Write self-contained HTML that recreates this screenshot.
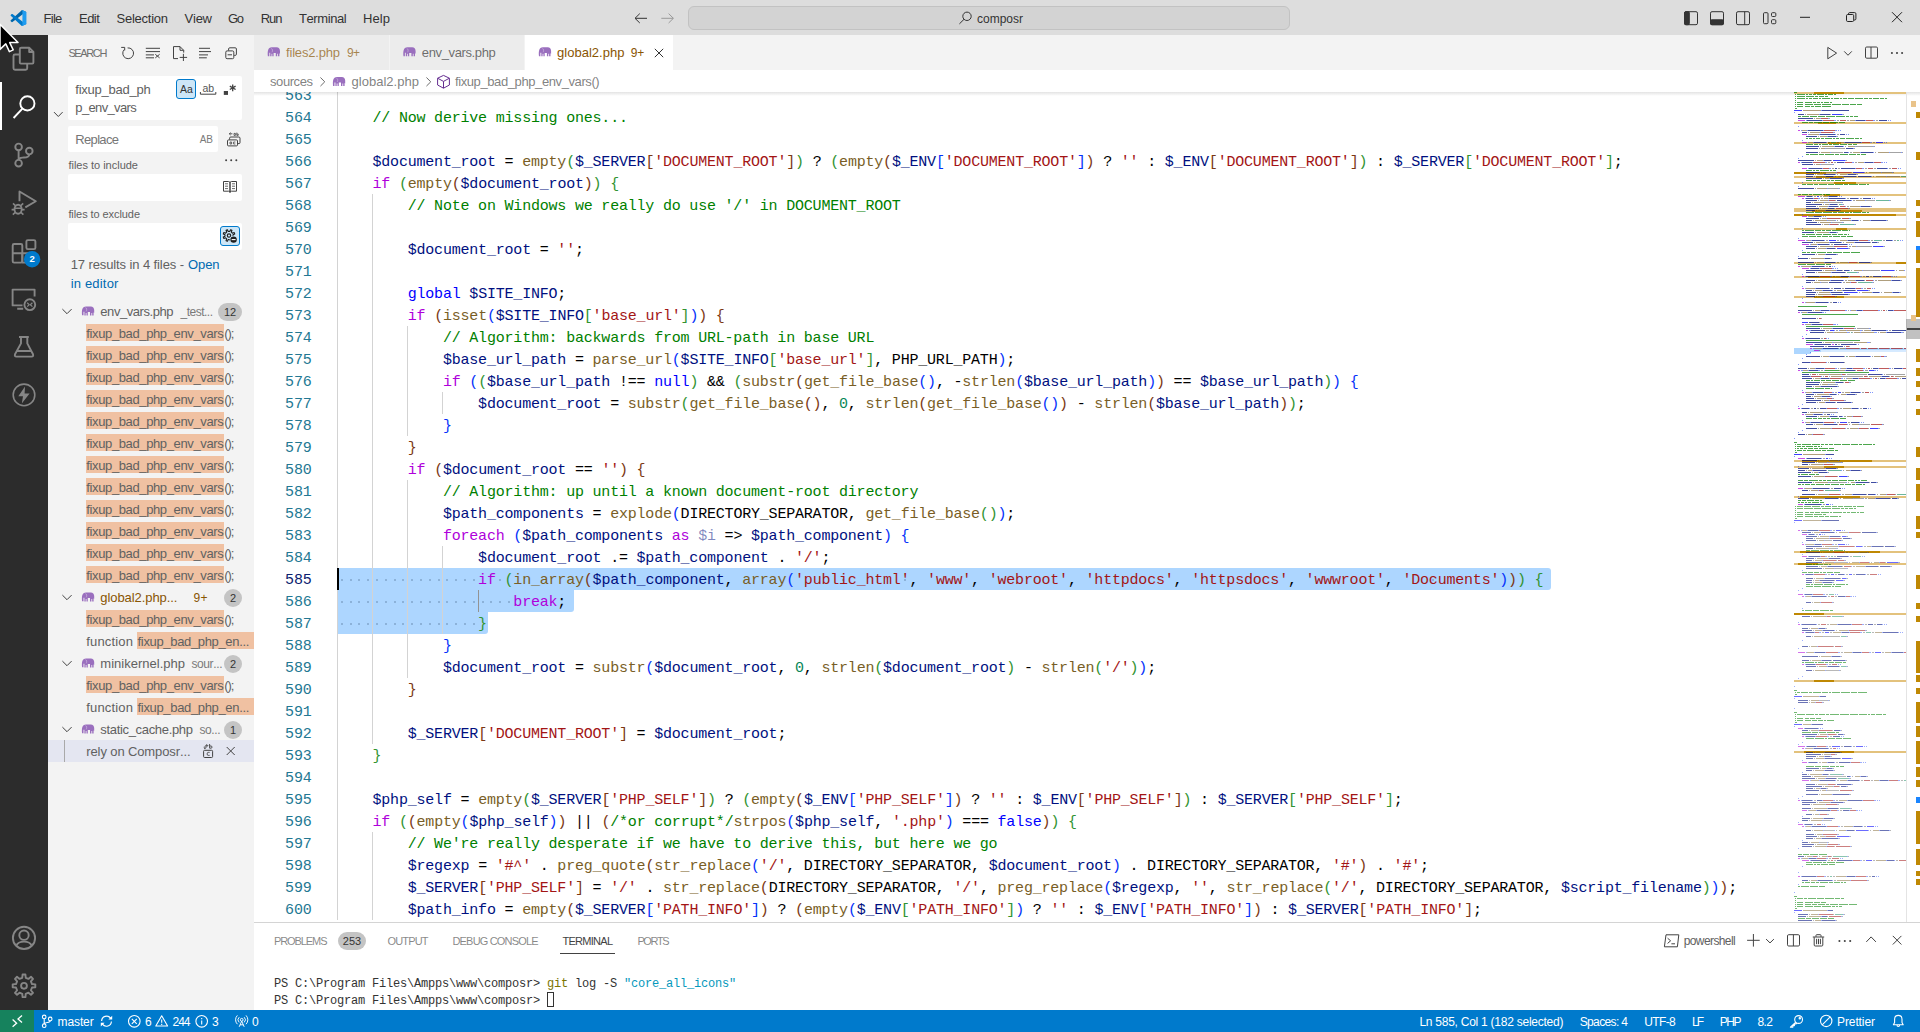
<!DOCTYPE html>
<html><head><meta charset="utf-8"><title>global2.php - composr - Visual Studio Code</title>
<style>
*{box-sizing:border-box;margin:0;padding:0}
html,body{width:1920px;height:1032px;overflow:hidden;background:#fff}
body{position:relative;font-family:"Liberation Sans",sans-serif;font-kerning:none;font-variant-ligatures:none;-webkit-font-smoothing:antialiased}
.r{position:absolute}
.t{position:absolute;white-space:pre;display:block}
.s{font-family:"Liberation Sans",sans-serif}
.m{font-family:"Liberation Mono",monospace}
.ed .ln{position:absolute;left:0;width:57.5px;text-align:right;font:15px/22px "Liberation Mono",monospace;letter-spacing:-0.2px;height:22px}
.ed .cl{position:absolute;left:83.3px;white-space:pre;font:15px/22px "Liberation Mono",monospace;letter-spacing:-0.2px;height:22px;color:#000}
.ed i{font-style:normal}
.ed b{position:absolute;width:2px;height:2px;border-radius:1px;background:#6f93b8;opacity:.7}
svg{position:absolute;overflow:visible}
.c0{color:#008000}.c1{color:#001080}.c2{color:#000000}.c3{color:#795E26}.c4{color:#319331}.c5{color:#7B3814}.c6{color:#A31515}.c7{color:#0431FA}.c8{color:#AF00DB}.c9{color:#0000FF}.c10{color:#098658}.c11{color:#00108080}</style></head>
<body>
<div class="r" style="left:0px;top:0px;width:1920px;height:35px;background:#DDDDDD;"></div>
<span class="t s" style="top:8.60px;line-height:20px;font-size:13px;color:#333333;left:43.50px;letter-spacing:-0.716px;">File</span>
<span class="t s" style="top:8.60px;line-height:20px;font-size:13px;color:#333333;left:79.00px;letter-spacing:-0.534px;">Edit</span>
<span class="t s" style="top:8.60px;line-height:20px;font-size:13px;color:#333333;left:116.50px;letter-spacing:-0.247px;">Selection</span>
<span class="t s" style="top:8.60px;line-height:20px;font-size:13px;color:#333333;left:184.60px;letter-spacing:-0.259px;">View</span>
<span class="t s" style="top:8.60px;line-height:20px;font-size:13px;color:#333333;left:228.00px;letter-spacing:-1.342px;">Go</span>
<span class="t s" style="top:8.60px;line-height:20px;font-size:13px;color:#333333;left:260.80px;letter-spacing:-1.074px;">Run</span>
<span class="t s" style="top:8.60px;line-height:20px;font-size:13px;color:#333333;left:299.00px;letter-spacing:-0.409px;">Terminal</span>
<span class="t s" style="top:8.60px;line-height:20px;font-size:13px;color:#333333;left:363.00px;letter-spacing:0.088px;">Help</span>
<div class="r" style="left:688px;top:6px;width:602px;height:24px;background:#D3D3D3;border:1px solid #C2C2C2;border-radius:6px"></div>
<span class="t s" style="top:9.50px;line-height:18px;font-size:12px;color:#333333;left:977.00px;letter-spacing:-0.002px;">composr</span>
<div class="r" style="left:0px;top:35px;width:48px;height:975px;background:#2C2C2C;"></div>
<div class="r" style="left:0px;top:82px;width:2px;height:48px;background:#FFFFFF;"></div>
<div class="r" style="left:48px;top:35px;width:206px;height:975px;background:#F3F3F3;"></div>
<span class="t s" style="top:45.00px;line-height:16px;font-size:11px;color:#6F6F6F;left:68.40px;letter-spacing:-1.368px;">SEARCH</span>
<div class="r" style="left:68px;top:76px;width:174px;height:44px;background:#FFFFFF;border-radius:2px;"></div>
<span class="t s" style="top:79.60px;line-height:20px;font-size:13px;color:#616161;left:75.30px;letter-spacing:-0.243px;">fixup_bad_ph</span>
<span class="t s" style="top:98.00px;line-height:20px;font-size:13px;color:#616161;left:75.30px;letter-spacing:-0.645px;">p_env_vars</span>
<div class="r" style="left:176px;top:79px;width:20px;height:20px;background:#CDE6F7;border:1px solid #007ACC;border-radius:3px"></div>
<div class="r" style="left:68px;top:126px;width:150px;height:26px;background:#FFFFFF;border-radius:2px;"></div>
<span class="t s" style="top:129.60px;line-height:20px;font-size:13px;color:#767676;left:75.30px;letter-spacing:-0.666px;">Replace</span>
<span class="t s" style="top:157.00px;line-height:16px;font-size:11px;color:#616161;left:68.40px;letter-spacing:-0.007px;">files to include</span>
<div class="r" style="left:68px;top:174px;width:174px;height:27px;background:#FFFFFF;border-radius:2px;"></div>
<span class="t s" style="top:206.00px;line-height:16px;font-size:11px;color:#616161;left:68.40px;letter-spacing:-0.077px;">files to exclude</span>
<div class="r" style="left:68px;top:223px;width:174px;height:27px;background:#FFFFFF;border-radius:2px;"></div>
<div class="r" style="left:220px;top:226px;width:20px;height:20px;background:#CDE6F7;border:1px solid #007ACC;border-radius:3px"></div>
<span class="t s" style="top:254.70px;line-height:20px;font-size:13px;color:#616161;left:70.70px;letter-spacing:-0.105px;">17 results in 4 files -</span>
<span class="t s" style="top:254.70px;line-height:20px;font-size:13px;color:#006AB1;left:188.00px;letter-spacing:-0.067px;">Open</span>
<span class="t s" style="top:273.60px;line-height:20px;font-size:13px;color:#006AB1;left:70.70px;letter-spacing:0.181px;">in editor</span>
<span class="t s" style="top:301.60px;line-height:20px;font-size:13px;color:#616161;left:100.30px;letter-spacing:-0.432px;">env_vars.php</span>
<span class="t s" style="top:302.60px;line-height:18px;font-size:12px;color:#7A7A7A;left:180.60px;letter-spacing:-0.517px;">_test...</span>
<div class="r" style="left:218px;top:303px;width:24px;height:18px;background:#C4C4C4;border-radius:9px"></div>
<span class="t s" style="top:303.60px;line-height:16px;font-size:11px;color:#333333;left:223.88px;">12</span>
<div class="r" style="left:86px;top:324px;width:138px;height:17px;background:#F0C1A2;"></div>
<span class="t s" style="top:323.60px;line-height:20px;font-size:13px;color:#616161;left:86.30px;letter-spacing:-0.375px;">fixup_bad_php_env_vars</span>
<span class="t s" style="top:323.60px;line-height:20px;font-size:13px;color:#616161;left:224.30px;letter-spacing:-1.135px;">();</span>
<div class="r" style="left:86px;top:346px;width:138px;height:17px;background:#F0C1A2;"></div>
<span class="t s" style="top:345.60px;line-height:20px;font-size:13px;color:#616161;left:86.30px;letter-spacing:-0.375px;">fixup_bad_php_env_vars</span>
<span class="t s" style="top:345.60px;line-height:20px;font-size:13px;color:#616161;left:224.30px;letter-spacing:-1.135px;">();</span>
<div class="r" style="left:86px;top:368px;width:138px;height:17px;background:#F0C1A2;"></div>
<span class="t s" style="top:367.60px;line-height:20px;font-size:13px;color:#616161;left:86.30px;letter-spacing:-0.375px;">fixup_bad_php_env_vars</span>
<span class="t s" style="top:367.60px;line-height:20px;font-size:13px;color:#616161;left:224.30px;letter-spacing:-1.135px;">();</span>
<div class="r" style="left:86px;top:390px;width:138px;height:17px;background:#F0C1A2;"></div>
<span class="t s" style="top:389.60px;line-height:20px;font-size:13px;color:#616161;left:86.30px;letter-spacing:-0.375px;">fixup_bad_php_env_vars</span>
<span class="t s" style="top:389.60px;line-height:20px;font-size:13px;color:#616161;left:224.30px;letter-spacing:-1.135px;">();</span>
<div class="r" style="left:86px;top:412px;width:138px;height:17px;background:#F0C1A2;"></div>
<span class="t s" style="top:411.60px;line-height:20px;font-size:13px;color:#616161;left:86.30px;letter-spacing:-0.375px;">fixup_bad_php_env_vars</span>
<span class="t s" style="top:411.60px;line-height:20px;font-size:13px;color:#616161;left:224.30px;letter-spacing:-1.135px;">();</span>
<div class="r" style="left:86px;top:434px;width:138px;height:17px;background:#F0C1A2;"></div>
<span class="t s" style="top:433.60px;line-height:20px;font-size:13px;color:#616161;left:86.30px;letter-spacing:-0.375px;">fixup_bad_php_env_vars</span>
<span class="t s" style="top:433.60px;line-height:20px;font-size:13px;color:#616161;left:224.30px;letter-spacing:-1.135px;">();</span>
<div class="r" style="left:86px;top:456px;width:138px;height:17px;background:#F0C1A2;"></div>
<span class="t s" style="top:455.60px;line-height:20px;font-size:13px;color:#616161;left:86.30px;letter-spacing:-0.375px;">fixup_bad_php_env_vars</span>
<span class="t s" style="top:455.60px;line-height:20px;font-size:13px;color:#616161;left:224.30px;letter-spacing:-1.135px;">();</span>
<div class="r" style="left:86px;top:478px;width:138px;height:17px;background:#F0C1A2;"></div>
<span class="t s" style="top:477.60px;line-height:20px;font-size:13px;color:#616161;left:86.30px;letter-spacing:-0.375px;">fixup_bad_php_env_vars</span>
<span class="t s" style="top:477.60px;line-height:20px;font-size:13px;color:#616161;left:224.30px;letter-spacing:-1.135px;">();</span>
<div class="r" style="left:86px;top:500px;width:138px;height:17px;background:#F0C1A2;"></div>
<span class="t s" style="top:499.60px;line-height:20px;font-size:13px;color:#616161;left:86.30px;letter-spacing:-0.375px;">fixup_bad_php_env_vars</span>
<span class="t s" style="top:499.60px;line-height:20px;font-size:13px;color:#616161;left:224.30px;letter-spacing:-1.135px;">();</span>
<div class="r" style="left:86px;top:522px;width:138px;height:17px;background:#F0C1A2;"></div>
<span class="t s" style="top:521.60px;line-height:20px;font-size:13px;color:#616161;left:86.30px;letter-spacing:-0.375px;">fixup_bad_php_env_vars</span>
<span class="t s" style="top:521.60px;line-height:20px;font-size:13px;color:#616161;left:224.30px;letter-spacing:-1.135px;">();</span>
<div class="r" style="left:86px;top:544px;width:138px;height:17px;background:#F0C1A2;"></div>
<span class="t s" style="top:543.60px;line-height:20px;font-size:13px;color:#616161;left:86.30px;letter-spacing:-0.375px;">fixup_bad_php_env_vars</span>
<span class="t s" style="top:543.60px;line-height:20px;font-size:13px;color:#616161;left:224.30px;letter-spacing:-1.135px;">();</span>
<div class="r" style="left:86px;top:566px;width:138px;height:17px;background:#F0C1A2;"></div>
<span class="t s" style="top:565.60px;line-height:20px;font-size:13px;color:#616161;left:86.30px;letter-spacing:-0.375px;">fixup_bad_php_env_vars</span>
<span class="t s" style="top:565.60px;line-height:20px;font-size:13px;color:#616161;left:224.30px;letter-spacing:-1.135px;">();</span>
<span class="t s" style="top:587.60px;line-height:20px;font-size:13px;color:#895503;left:100.30px;letter-spacing:-0.074px;">global2.php...</span>
<span class="t s" style="top:588.60px;line-height:18px;font-size:12px;color:#895503;left:193.40px;letter-spacing:0.318px;">9+</span>
<div class="r" style="left:224px;top:589px;width:18px;height:18px;background:#C4C4C4;border-radius:9px"></div>
<span class="t s" style="top:589.60px;line-height:16px;font-size:11px;color:#333333;left:229.94px;">2</span>
<div class="r" style="left:86px;top:610px;width:138px;height:17px;background:#F0C1A2;"></div>
<span class="t s" style="top:609.60px;line-height:20px;font-size:13px;color:#616161;left:86.30px;letter-spacing:-0.375px;">fixup_bad_php_env_vars</span>
<span class="t s" style="top:609.60px;line-height:20px;font-size:13px;color:#616161;left:224.30px;letter-spacing:-1.135px;">();</span>
<div class="r" style="left:137px;top:632px;width:117px;height:17px;background:#F0C1A2;"></div>
<span class="t s" style="top:631.60px;line-height:20px;font-size:13px;color:#616161;left:86.30px;letter-spacing:0.167px;">function</span>
<span class="t s" style="top:631.60px;line-height:20px;font-size:13px;color:#616161;left:137.60px;letter-spacing:-0.340px;">fixup_bad_php_en...</span>
<span class="t s" style="top:653.60px;line-height:20px;font-size:13px;color:#616161;left:100.30px;letter-spacing:0.012px;">minikernel.php</span>
<span class="t s" style="top:654.60px;line-height:18px;font-size:12px;color:#7A7A7A;left:191.40px;letter-spacing:-0.374px;">sour...</span>
<div class="r" style="left:224px;top:655px;width:18px;height:18px;background:#C4C4C4;border-radius:9px"></div>
<span class="t s" style="top:655.60px;line-height:16px;font-size:11px;color:#333333;left:229.94px;">2</span>
<div class="r" style="left:86px;top:676px;width:138px;height:17px;background:#F0C1A2;"></div>
<span class="t s" style="top:675.60px;line-height:20px;font-size:13px;color:#616161;left:86.30px;letter-spacing:-0.375px;">fixup_bad_php_env_vars</span>
<span class="t s" style="top:675.60px;line-height:20px;font-size:13px;color:#616161;left:224.30px;letter-spacing:-1.135px;">();</span>
<div class="r" style="left:137px;top:698px;width:117px;height:17px;background:#F0C1A2;"></div>
<span class="t s" style="top:697.60px;line-height:20px;font-size:13px;color:#616161;left:86.30px;letter-spacing:0.167px;">function</span>
<span class="t s" style="top:697.60px;line-height:20px;font-size:13px;color:#616161;left:137.60px;letter-spacing:-0.340px;">fixup_bad_php_en...</span>
<span class="t s" style="top:719.60px;line-height:20px;font-size:13px;color:#616161;left:100.30px;letter-spacing:-0.324px;">static_cache.php</span>
<span class="t s" style="top:720.60px;line-height:18px;font-size:12px;color:#7A7A7A;left:199.50px;letter-spacing:-0.419px;">so...</span>
<div class="r" style="left:224px;top:721px;width:18px;height:18px;background:#C4C4C4;border-radius:9px"></div>
<span class="t s" style="top:721.60px;line-height:16px;font-size:11px;color:#333333;left:229.94px;">1</span>
<div class="r" style="left:48px;top:740px;width:206px;height:22px;background:#E4E6F1;"></div>
<div class="r" style="left:64px;top:740px;width:1px;height:22px;background:#A9A9A9;"></div>
<span class="t s" style="top:741.60px;line-height:20px;font-size:13px;color:#616161;left:86.30px;letter-spacing:-0.118px;">rely on Composr...</span>
<div class="r" style="left:254px;top:35px;width:1666px;height:35px;background:#F3F3F3;"></div>
<div class="r" style="left:254px;top:35px;width:135px;height:35px;background:#ECECEC;"></div>
<div class="r" style="left:389px;top:35px;width:1px;height:35px;background:#F3F3F3;"></div>
<div class="r" style="left:390px;top:35px;width:134px;height:35px;background:#ECECEC;"></div>
<div class="r" style="left:524px;top:35px;width:1px;height:35px;background:#F3F3F3;"></div>
<div class="r" style="left:525px;top:35px;width:148px;height:35px;background:#FFFFFF;"></div>
<span class="t s" style="top:43.20px;line-height:20px;font-size:13px;color:#895503B3;left:286.00px;letter-spacing:-0.183px;">files2.php</span>
<span class="t s" style="top:44.20px;line-height:18px;font-size:12px;color:#895503B3;left:347.00px;letter-spacing:-0.682px;">9+</span>
<span class="t s" style="top:43.20px;line-height:20px;font-size:13px;color:#333333B3;left:421.80px;letter-spacing:-0.368px;">env_vars.php</span>
<span class="t s" style="top:43.20px;line-height:20px;font-size:13px;color:#895503;left:557.00px;letter-spacing:0.027px;">global2.php</span>
<span class="t s" style="top:44.20px;line-height:18px;font-size:12px;color:#895503;left:630.70px;letter-spacing:-0.182px;">9+</span>
<div class="r" style="left:254px;top:70px;width:1666px;height:22px;background:#FFFFFF;"></div>
<span class="t s" style="top:72.20px;line-height:20px;font-size:13px;color:#616161CC;left:270.00px;letter-spacing:-0.420px;">sources</span>
<span class="t s" style="top:72.20px;line-height:20px;font-size:13px;color:#616161CC;left:351.50px;letter-spacing:0.027px;">global2.php</span>
<span class="t s" style="top:72.20px;line-height:20px;font-size:13px;color:#616161CC;left:455.00px;letter-spacing:-0.402px;">fixup_bad_php_env_vars()</span>
<div class="r ed" style="left:254px;top:92px;width:1666px;height:830px;background:#fff;overflow:hidden">
<div class="r" style="left:83px;top:476px;width:1214px;height:22px;background:#ADD6FF;border-radius:0 3px 3px 0;"></div>
<div class="r" style="left:83px;top:498px;width:237px;height:22px;background:#ADD6FF;border-radius:0 0 3px 0;"></div>
<div class="r" style="left:83px;top:520px;width:151px;height:22px;background:#ADD6FF;border-radius:0 0 3px 0;"></div>
<div class="r" style="left:83px;top:-8px;width:1px;height:836px;background:#D3D3D3;"></div>
<div class="r" style="left:118px;top:102px;width:1px;height:550px;background:#D3D3D3;"></div>
<div class="r" style="left:118px;top:740px;width:1px;height:88px;background:#D3D3D3;"></div>
<div class="r" style="left:153px;top:234px;width:1px;height:110px;background:#D3D3D3;"></div>
<div class="r" style="left:153px;top:388px;width:1px;height:198px;background:#D3D3D3;"></div>
<div class="r" style="left:188px;top:300px;width:1px;height:22px;background:#D3D3D3;"></div>
<div class="r" style="left:188px;top:454px;width:1px;height:88px;background:#D3D3D3;"></div>
<div class="r" style="left:224px;top:498px;width:1px;height:22px;background:#939393;"></div>
<div class="r" style="left:83px;top:476px;width:2px;height:22px;background:#000;"></div>
<b style="left:86.7px;top:486.5px"></b><b style="left:95.5px;top:486.5px"></b><b style="left:104.3px;top:486.5px"></b><b style="left:113.1px;top:486.5px"></b><b style="left:121.9px;top:486.5px"></b><b style="left:130.7px;top:486.5px"></b><b style="left:139.5px;top:486.5px"></b><b style="left:148.3px;top:486.5px"></b><b style="left:157.1px;top:486.5px"></b><b style="left:165.9px;top:486.5px"></b><b style="left:174.7px;top:486.5px"></b><b style="left:183.5px;top:486.5px"></b><b style="left:192.3px;top:486.5px"></b><b style="left:201.1px;top:486.5px"></b><b style="left:209.9px;top:486.5px"></b><b style="left:218.7px;top:486.5px"></b><b style="left:245.1px;top:486.5px"></b><b style="left:456.3px;top:486.5px"></b><b style="left:588.3px;top:486.5px"></b><b style="left:649.9px;top:486.5px"></b><b style="left:746.7px;top:486.5px"></b><b style="left:852.3px;top:486.5px"></b><b style="left:966.7px;top:486.5px"></b><b style="left:1063.5px;top:486.5px"></b><b style="left:1177.9px;top:486.5px"></b>
<b style="left:86.7px;top:508.5px"></b><b style="left:95.5px;top:508.5px"></b><b style="left:104.3px;top:508.5px"></b><b style="left:113.1px;top:508.5px"></b><b style="left:121.9px;top:508.5px"></b><b style="left:130.7px;top:508.5px"></b><b style="left:139.5px;top:508.5px"></b><b style="left:148.3px;top:508.5px"></b><b style="left:157.1px;top:508.5px"></b><b style="left:165.9px;top:508.5px"></b><b style="left:174.7px;top:508.5px"></b><b style="left:183.5px;top:508.5px"></b><b style="left:192.3px;top:508.5px"></b><b style="left:201.1px;top:508.5px"></b><b style="left:209.9px;top:508.5px"></b><b style="left:218.7px;top:508.5px"></b><b style="left:227.5px;top:508.5px"></b><b style="left:236.3px;top:508.5px"></b><b style="left:245.1px;top:508.5px"></b><b style="left:253.9px;top:508.5px"></b>
<b style="left:86.7px;top:530.5px"></b><b style="left:95.5px;top:530.5px"></b><b style="left:104.3px;top:530.5px"></b><b style="left:113.1px;top:530.5px"></b><b style="left:121.9px;top:530.5px"></b><b style="left:130.7px;top:530.5px"></b><b style="left:139.5px;top:530.5px"></b><b style="left:148.3px;top:530.5px"></b><b style="left:157.1px;top:530.5px"></b><b style="left:165.9px;top:530.5px"></b><b style="left:174.7px;top:530.5px"></b><b style="left:183.5px;top:530.5px"></b><b style="left:192.3px;top:530.5px"></b><b style="left:201.1px;top:530.5px"></b><b style="left:209.9px;top:530.5px"></b><b style="left:218.7px;top:530.5px"></b>
<div class="ln" style="top:-6px;color:#237893">563</div>
<div class="ln" style="top:16px;color:#237893">564</div>
<div class="cl" style="top:16px"><i class="c0">    // Now derive missing ones...</i></div>
<div class="ln" style="top:38px;color:#237893">565</div>
<div class="ln" style="top:60px;color:#237893">566</div>
<div class="cl" style="top:60px"><i class="c1">    $document_root </i><i class="c2">= </i><i class="c3">empty</i><i class="c4">(</i><i class="c1">$_SERVER</i><i class="c5">[</i><i class="c6">'DOCUMENT_ROOT'</i><i class="c5">]</i><i class="c4">) </i><i class="c2">? </i><i class="c4">(</i><i class="c3">empty</i><i class="c5">(</i><i class="c1">$_ENV</i><i class="c7">[</i><i class="c6">'DOCUMENT_ROOT'</i><i class="c7">]</i><i class="c5">) </i><i class="c2">? </i><i class="c6">'' </i><i class="c2">: </i><i class="c1">$_ENV</i><i class="c5">[</i><i class="c6">'DOCUMENT_ROOT'</i><i class="c5">]</i><i class="c4">) </i><i class="c2">: </i><i class="c1">$_SERVER</i><i class="c4">[</i><i class="c6">'DOCUMENT_ROOT'</i><i class="c4">]</i><i class="c2">;</i></div>
<div class="ln" style="top:82px;color:#237893">567</div>
<div class="cl" style="top:82px"><i class="c8">    if </i><i class="c4">(</i><i class="c3">empty</i><i class="c5">(</i><i class="c1">$document_root</i><i class="c5">)</i><i class="c4">) {</i></div>
<div class="ln" style="top:104px;color:#237893">568</div>
<div class="cl" style="top:104px"><i class="c0">        // Note on Windows we really do use '/' in DOCUMENT_ROOT</i></div>
<div class="ln" style="top:126px;color:#237893">569</div>
<div class="ln" style="top:148px;color:#237893">570</div>
<div class="cl" style="top:148px"><i class="c1">        $document_root </i><i class="c2">= </i><i class="c6">''</i><i class="c2">;</i></div>
<div class="ln" style="top:170px;color:#237893">571</div>
<div class="ln" style="top:192px;color:#237893">572</div>
<div class="cl" style="top:192px"><i class="c9">        global </i><i class="c1">$SITE_INFO</i><i class="c2">;</i></div>
<div class="ln" style="top:214px;color:#237893">573</div>
<div class="cl" style="top:214px"><i class="c8">        if </i><i class="c5">(</i><i class="c3">isset</i><i class="c7">(</i><i class="c1">$SITE_INFO</i><i class="c4">[</i><i class="c6">'base_url'</i><i class="c4">]</i><i class="c7">)</i><i class="c5">) {</i></div>
<div class="ln" style="top:236px;color:#237893">574</div>
<div class="cl" style="top:236px"><i class="c0">            // Algorithm: backwards from URL-path in base URL</i></div>
<div class="ln" style="top:258px;color:#237893">575</div>
<div class="cl" style="top:258px"><i class="c1">            $base_url_path </i><i class="c2">= </i><i class="c3">parse_url</i><i class="c7">(</i><i class="c1">$SITE_INFO</i><i class="c4">[</i><i class="c6">'base_url'</i><i class="c4">]</i><i class="c2">, PHP_URL_PATH</i><i class="c7">)</i><i class="c2">;</i></div>
<div class="ln" style="top:280px;color:#237893">576</div>
<div class="cl" style="top:280px"><i class="c8">            if </i><i class="c7">(</i><i class="c4">(</i><i class="c1">$base_url_path </i><i class="c2">!== </i><i class="c9">null</i><i class="c4">) </i><i class="c2">&amp;&amp; </i><i class="c4">(</i><i class="c3">substr</i><i class="c5">(</i><i class="c3">get_file_base</i><i class="c7">()</i><i class="c2">, -</i><i class="c3">strlen</i><i class="c7">(</i><i class="c1">$base_url_path</i><i class="c7">)</i><i class="c5">) </i><i class="c2">== </i><i class="c1">$base_url_path</i><i class="c4">)</i><i class="c7">) {</i></div>
<div class="ln" style="top:302px;color:#237893">577</div>
<div class="cl" style="top:302px"><i class="c1">                $document_root </i><i class="c2">= </i><i class="c3">substr</i><i class="c4">(</i><i class="c3">get_file_base</i><i class="c5">()</i><i class="c2">, </i><i class="c10">0</i><i class="c2">, </i><i class="c3">strlen</i><i class="c5">(</i><i class="c3">get_file_base</i><i class="c7">()</i><i class="c5">) </i><i class="c2">- </i><i class="c3">strlen</i><i class="c5">(</i><i class="c1">$base_url_path</i><i class="c5">)</i><i class="c4">)</i><i class="c2">;</i></div>
<div class="ln" style="top:324px;color:#237893">578</div>
<div class="cl" style="top:324px"><i class="c7">            }</i></div>
<div class="ln" style="top:346px;color:#237893">579</div>
<div class="cl" style="top:346px"><i class="c5">        }</i></div>
<div class="ln" style="top:368px;color:#237893">580</div>
<div class="cl" style="top:368px"><i class="c8">        if </i><i class="c5">(</i><i class="c1">$document_root </i><i class="c2">== </i><i class="c6">''</i><i class="c5">) {</i></div>
<div class="ln" style="top:390px;color:#237893">581</div>
<div class="cl" style="top:390px"><i class="c0">            // Algorithm: up until a known document-root directory</i></div>
<div class="ln" style="top:412px;color:#237893">582</div>
<div class="cl" style="top:412px"><i class="c1">            $path_components </i><i class="c2">= </i><i class="c3">explode</i><i class="c7">(</i><i class="c2">DIRECTORY_SEPARATOR, </i><i class="c3">get_file_base</i><i class="c4">()</i><i class="c7">)</i><i class="c2">;</i></div>
<div class="ln" style="top:434px;color:#237893">583</div>
<div class="cl" style="top:434px"><i class="c8">            foreach </i><i class="c7">(</i><i class="c1">$path_components </i><i class="c8">as </i><i class="c11">$i </i><i class="c2">=&gt; </i><i class="c1">$path_component</i><i class="c7">) {</i></div>
<div class="ln" style="top:456px;color:#237893">584</div>
<div class="cl" style="top:456px"><i class="c1">                $document_root </i><i class="c2">.= </i><i class="c1">$path_component </i><i class="c2">. </i><i class="c6">'/'</i><i class="c2">;</i></div>
<div class="ln" style="top:478px;color:#0B216F">585</div>
<div class="cl" style="top:478px"><i class="c8">                if </i><i class="c4">(</i><i class="c3">in_array</i><i class="c5">(</i><i class="c1">$path_component</i><i class="c2">, </i><i class="c3">array</i><i class="c7">(</i><i class="c6">'public_html'</i><i class="c2">, </i><i class="c6">'www'</i><i class="c2">, </i><i class="c6">'webroot'</i><i class="c2">, </i><i class="c6">'httpdocs'</i><i class="c2">, </i><i class="c6">'httpsdocs'</i><i class="c2">, </i><i class="c6">'wwwroot'</i><i class="c2">, </i><i class="c6">'Documents'</i><i class="c7">)</i><i class="c5">)</i><i class="c4">) {</i></div>
<div class="ln" style="top:500px;color:#237893">586</div>
<div class="cl" style="top:500px"><i class="c8">                    break</i><i class="c2">;</i></div>
<div class="ln" style="top:522px;color:#237893">587</div>
<div class="cl" style="top:522px"><i class="c4">                }</i></div>
<div class="ln" style="top:544px;color:#237893">588</div>
<div class="cl" style="top:544px"><i class="c7">            }</i></div>
<div class="ln" style="top:566px;color:#237893">589</div>
<div class="cl" style="top:566px"><i class="c1">            $document_root </i><i class="c2">= </i><i class="c3">substr</i><i class="c7">(</i><i class="c1">$document_root</i><i class="c2">, </i><i class="c10">0</i><i class="c2">, </i><i class="c3">strlen</i><i class="c4">(</i><i class="c1">$document_root</i><i class="c4">) </i><i class="c2">- </i><i class="c3">strlen</i><i class="c4">(</i><i class="c6">'/'</i><i class="c4">)</i><i class="c7">)</i><i class="c2">;</i></div>
<div class="ln" style="top:588px;color:#237893">590</div>
<div class="cl" style="top:588px"><i class="c5">        }</i></div>
<div class="ln" style="top:610px;color:#237893">591</div>
<div class="ln" style="top:632px;color:#237893">592</div>
<div class="cl" style="top:632px"><i class="c1">        $_SERVER</i><i class="c5">[</i><i class="c6">'DOCUMENT_ROOT'</i><i class="c5">] </i><i class="c2">= </i><i class="c1">$document_root</i><i class="c2">;</i></div>
<div class="ln" style="top:654px;color:#237893">593</div>
<div class="cl" style="top:654px"><i class="c4">    }</i></div>
<div class="ln" style="top:676px;color:#237893">594</div>
<div class="ln" style="top:698px;color:#237893">595</div>
<div class="cl" style="top:698px"><i class="c1">    $php_self </i><i class="c2">= </i><i class="c3">empty</i><i class="c4">(</i><i class="c1">$_SERVER</i><i class="c5">[</i><i class="c6">'PHP_SELF'</i><i class="c5">]</i><i class="c4">) </i><i class="c2">? </i><i class="c4">(</i><i class="c3">empty</i><i class="c5">(</i><i class="c1">$_ENV</i><i class="c7">[</i><i class="c6">'PHP_SELF'</i><i class="c7">]</i><i class="c5">) </i><i class="c2">? </i><i class="c6">'' </i><i class="c2">: </i><i class="c1">$_ENV</i><i class="c5">[</i><i class="c6">'PHP_SELF'</i><i class="c5">]</i><i class="c4">) </i><i class="c2">: </i><i class="c1">$_SERVER</i><i class="c4">[</i><i class="c6">'PHP_SELF'</i><i class="c4">]</i><i class="c2">;</i></div>
<div class="ln" style="top:720px;color:#237893">596</div>
<div class="cl" style="top:720px"><i class="c8">    if </i><i class="c4">(</i><i class="c5">(</i><i class="c3">empty</i><i class="c7">(</i><i class="c1">$php_self</i><i class="c7">)</i><i class="c5">) </i><i class="c2">|| </i><i class="c5">(</i><i class="c0">/*or corrupt*/</i><i class="c3">strpos</i><i class="c7">(</i><i class="c1">$php_self</i><i class="c2">, </i><i class="c6">'.php'</i><i class="c7">) </i><i class="c2">=== </i><i class="c9">false</i><i class="c5">)</i><i class="c4">) {</i></div>
<div class="ln" style="top:742px;color:#237893">597</div>
<div class="cl" style="top:742px"><i class="c0">        // We're really desperate if we have to derive this, but here we go</i></div>
<div class="ln" style="top:764px;color:#237893">598</div>
<div class="cl" style="top:764px"><i class="c1">        $regexp </i><i class="c2">= </i><i class="c6">'#^' </i><i class="c2">. </i><i class="c3">preg_quote</i><i class="c5">(</i><i class="c3">str_replace</i><i class="c7">(</i><i class="c6">'/'</i><i class="c2">, DIRECTORY_SEPARATOR, </i><i class="c1">$document_root</i><i class="c7">) </i><i class="c2">. DIRECTORY_SEPARATOR, </i><i class="c6">'#'</i><i class="c5">) </i><i class="c2">. </i><i class="c6">'#'</i><i class="c2">;</i></div>
<div class="ln" style="top:786px;color:#237893">599</div>
<div class="cl" style="top:786px"><i class="c1">        $_SERVER</i><i class="c5">[</i><i class="c6">'PHP_SELF'</i><i class="c5">] </i><i class="c2">= </i><i class="c6">'/' </i><i class="c2">. </i><i class="c3">str_replace</i><i class="c5">(</i><i class="c2">DIRECTORY_SEPARATOR, </i><i class="c6">'/'</i><i class="c2">, </i><i class="c3">preg_replace</i><i class="c7">(</i><i class="c1">$regexp</i><i class="c2">, </i><i class="c6">''</i><i class="c2">, </i><i class="c3">str_replace</i><i class="c4">(</i><i class="c6">'/'</i><i class="c2">, DIRECTORY_SEPARATOR, </i><i class="c1">$script_filename</i><i class="c4">)</i><i class="c7">)</i><i class="c5">)</i><i class="c2">;</i></div>
<div class="ln" style="top:808px;color:#237893">600</div>
<div class="cl" style="top:808px"><i class="c1">        $path_info </i><i class="c2">= </i><i class="c3">empty</i><i class="c5">(</i><i class="c1">$_SERVER</i><i class="c7">[</i><i class="c6">'PATH_INFO'</i><i class="c7">]</i><i class="c5">) </i><i class="c2">? </i><i class="c5">(</i><i class="c3">empty</i><i class="c7">(</i><i class="c1">$_ENV</i><i class="c4">[</i><i class="c6">'PATH_INFO'</i><i class="c4">]</i><i class="c7">) </i><i class="c2">? </i><i class="c6">'' </i><i class="c2">: </i><i class="c1">$_ENV</i><i class="c7">[</i><i class="c6">'PATH_INFO'</i><i class="c7">]</i><i class="c5">) </i><i class="c2">: </i><i class="c1">$_SERVER</i><i class="c5">[</i><i class="c6">'PATH_INFO'</i><i class="c5">]</i><i class="c2">;</i></div>
<div class="r" style="left:0;top:0;width:1666px;height:4px;background:linear-gradient(#0000001c,#0000)"></div>
</div>
<div class="r" style="left:254px;top:922px;width:1666px;height:88px;background:#FFFFFF;"></div>
<div class="r" style="left:254px;top:922px;width:1666px;height:1px;background:#D4D4D4;"></div>
<span class="t s" style="top:933.00px;line-height:16px;font-size:11px;color:#616161BF;left:274.00px;letter-spacing:-1.090px;">PROBLEMS</span>
<span class="t s" style="top:933.00px;line-height:16px;font-size:11px;color:#616161BF;left:387.50px;letter-spacing:-0.844px;">OUTPUT</span>
<span class="t s" style="top:933.00px;line-height:16px;font-size:11px;color:#616161BF;left:452.50px;letter-spacing:-0.830px;">DEBUG CONSOLE</span>
<span class="t s" style="top:933.00px;line-height:16px;font-size:11px;color:#424242;left:562.50px;letter-spacing:-0.731px;">TERMINAL</span>
<span class="t s" style="top:933.00px;line-height:16px;font-size:11px;color:#616161BF;left:637.50px;letter-spacing:-1.473px;">PORTS</span>
<div class="r" style="left:560px;top:953px;width:55px;height:1px;background:#424242;"></div>
<div class="r" style="left:338px;top:932px;width:28px;height:18px;background:#C4C4C4;border-radius:9px"></div>
<span class="t s" style="top:933.00px;line-height:16px;font-size:11px;color:#333333;left:342.82px;">253</span>
<span class="t s" style="top:931.50px;line-height:18px;font-size:12px;color:#616161;left:1683.70px;letter-spacing:-0.596px;">powershell</span>
<span class="t m" style="left:274px;top:975.7px;line-height:17px;font-size:12px;letter-spacing:-0.2px;color:#333333">PS C:\Program Files\Ampps\www\composr&gt; </span>
<span class="t m" style="left:547px;top:975.7px;line-height:17px;font-size:12px;letter-spacing:-0.2px;color:#7B7500">git</span>
<span class="t m" style="left:568px;top:975.7px;line-height:17px;font-size:12px;letter-spacing:-0.2px;color:#333333"> log -S </span>
<span class="t m" style="left:624px;top:975.7px;line-height:17px;font-size:12px;letter-spacing:-0.2px;color:#0598BC">"core_all_icons"</span>
<span class="t m" style="left:274px;top:992.7px;line-height:17px;font-size:12px;letter-spacing:-0.2px;color:#333333">PS C:\Program Files\Ampps\www\composr&gt; </span>
<div class="r" style="left:547px;top:992px;width:7px;height:15px;border:1px solid #333;background:none"></div>
<div class="r" style="left:0px;top:1010px;width:1920px;height:22px;background:#007ACC;"></div>
<div class="r" style="left:0px;top:1010px;width:34px;height:22px;background:#16825D;"></div>
<span class="t s" style="top:1012.50px;line-height:18px;font-size:12px;color:#FFFFFF;left:57.50px;letter-spacing:-0.095px;">master</span>
<span class="t s" style="top:1012.50px;line-height:18px;font-size:12px;color:#FFFFFF;left:145.00px;">6</span>
<span class="t s" style="top:1012.50px;line-height:18px;font-size:12px;color:#FFFFFF;left:172.50px;letter-spacing:-1.011px;">244</span>
<span class="t s" style="top:1012.50px;line-height:18px;font-size:12px;color:#FFFFFF;left:212.00px;">3</span>
<span class="t s" style="top:1012.50px;line-height:18px;font-size:12px;color:#FFFFFF;left:252.00px;">0</span>
<span class="t s" style="top:1012.50px;line-height:18px;font-size:12px;color:#FFFFFF;left:1419.40px;letter-spacing:-0.250px;">Ln 585, Col 1 (182 selected)</span>
<span class="t s" style="top:1012.50px;line-height:18px;font-size:12px;color:#FFFFFF;left:1579.70px;letter-spacing:-0.633px;">Spaces: 4</span>
<span class="t s" style="top:1012.50px;line-height:18px;font-size:12px;color:#FFFFFF;left:1644.30px;letter-spacing:-0.624px;">UTF-8</span>
<span class="t s" style="top:1012.50px;line-height:18px;font-size:12px;color:#FFFFFF;left:1692.00px;letter-spacing:-2.004px;">LF</span>
<span class="t s" style="top:1012.50px;line-height:18px;font-size:12px;color:#FFFFFF;left:1719.70px;letter-spacing:-1.487px;">PHP</span>
<span class="t s" style="top:1012.50px;line-height:18px;font-size:12px;color:#FFFFFF;left:1757.40px;letter-spacing:-0.591px;">8.2</span>
<span class="t s" style="top:1012.50px;line-height:18px;font-size:12px;color:#FFFFFF;left:1837.00px;letter-spacing:-0.097px;">Prettier</span>
<svg style="left:0;top:0" width="1920" height="1032" viewBox="0 0 1920 1032" fill="none"><g transform="translate(9.60 9.60) scale(0.7041666666666666)"><path d="M23.2 3.1L18.5 .9C18 .6 17.3 .7 16.9 1.2L1.6 15.1C1.2 15.5 1.2 16.1 1.6 16.5L2.9 17.6C3.2 17.9 3.7 18 4.1 17.7L22.4 3.8C23 3.3 23.9 3.8 23.9 4.5V4.4C23.9 3.9 23.6 3.4 23.2 3.1Z" fill="#0065A9" stroke="none"/><path d="M23.2 20.9L18.5 23.1C18 23.4 17.3 23.3 16.9 22.8L1.6 8.9C1.2 8.5 1.2 7.9 1.6 7.5L2.9 6.4C3.2 6.1 3.7 6 4.1 6.3L22.4 20.2C23 20.7 23.9 20.2 23.9 19.5V19.6C23.9 20.1 23.6 20.6 23.2 20.9Z" fill="#007ACC" stroke="none"/><path d="M18.5 23.1C18 23.4 17.3 23.3 16.9 22.8C17.4 23.3 18.2 23 18.2 22.3V1.7C18.2 1 17.4 .7 16.9 1.2C17.3 .7 18 .6 18.5 .9L23.2 3.1C23.6 3.4 23.9 3.9 23.9 4.4V19.6C23.9 20.1 23.6 20.6 23.2 20.9Z" fill="#1F9CF0" stroke="none"/></g><g stroke="#333" stroke-width="1" fill="none" color="#333" ><path d="M647 18.3H635.2M639.8 13.6L635 18.3L639.8 23"/></g><g stroke="#9a9a9a" stroke-width="1" fill="none" color="#9a9a9a" ><path d="M661.3 18.3H673.2M668.6 13.6L673.4 18.3L668.6 23"/></g><g stroke="#333" stroke-width="1" fill="none" color="#333" ><circle cx="967" cy="16.3" r="4.2"/><path d="M964 19.3L959.4 23.9"/></g><g stroke="#333" stroke-width="1" fill="none" color="#333" ><rect x="1684.5" y="11.7" width="13" height="13" rx="1.5"/><rect x="1684.5" y="11.7" width="4.8" height="13" rx="1.2" fill="#333"/></g><g stroke="#333" stroke-width="1" fill="none" color="#333" ><rect x="1710.5" y="11.7" width="13" height="13" rx="1.5"/><rect x="1710.5" y="19.8" width="13" height="4.9" rx="1.2" fill="#333"/></g><g stroke="#333" stroke-width="1" fill="none" color="#333" ><rect x="1736.5" y="11.7" width="13" height="13" rx="1.5"/><path d="M1744.7 11.7V24.7"/></g><g stroke="#333" stroke-width="1" fill="none" color="#333" ><rect x="1763.5" y="12.7" width="4.5" height="11" rx="1"/><rect x="1771.5" y="12.7" width="4.3" height="3.8" rx="1"/><rect x="1771.5" y="19.7" width="4.3" height="4" rx="1"/></g><g stroke="#222" stroke-width="1" fill="none" color="#222" ><path d="M1800 17.3H1810"/></g><g stroke="#222" stroke-width="1" fill="none" color="#222" ><rect x="1846.5" y="14.5" width="7.2" height="7" rx="1.2"/><path d="M1848.5 14.3V13.8Q1848.5 12.6 1849.7 12.6H1854.7Q1855.9 12.6 1855.9 13.8V18.8Q1855.9 20 1854.7 20H1854"/></g><g stroke="#222" stroke-width="1" fill="none" color="#222" ><path d="M1892 12.2L1902 22.2M1902 12.2L1892 22.2"/></g><g transform="translate(0 34)" stroke="#868686" stroke-width="1.9" fill="none" color="#868686" stroke-linejoin="round"><path d="M21.3 13.8H29.4L33.4 17.8V28.6Q33.4 29.6 32.4 29.6H20.8Q19.8 29.6 19.8 28.6V15.3Q19.8 13.8 21.3 13.8ZM29.2 14V18H33.2"/><path d="M19.6 20.5H15Q13.5 20.5 13.5 22V34.3Q13.5 35.8 15 35.8H25.7Q27.2 35.8 27.2 34.3V29.8"/></g><g transform="translate(0 82)" stroke="#FFFFFF" stroke-width="1.9" fill="none" color="#FFFFFF" stroke-linejoin="round"><circle cx="27.4" cy="21.4" r="7.1"/><path d="M22.4 26.6L13.6 36"/></g><g transform="translate(0 130)" stroke="#868686" stroke-width="1.9" fill="none" color="#868686" stroke-linejoin="round"><circle cx="18.6" cy="16.9" r="3.3"/><circle cx="18.6" cy="33.2" r="3.3"/><circle cx="29.3" cy="21.1" r="3.3"/><path d="M18.6 20.2V29.9M29.3 24.4C29.3 27.6 26 27.3 22.5 27.6C20 27.8 18.6 28.6 18.6 29.9"/></g><g transform="translate(0 178)" stroke="#868686" stroke-width="1.9" fill="none" color="#868686" stroke-linejoin="round"><path d="M19.5 23.3V13.5L35.8 23.3L25.3 29.4"/><ellipse cx="18.1" cy="31.2" rx="3.6" ry="4.5"/><path d="M14.6 30.2H21.6M15.4 27.6L13 25.4M20.8 27.6L23.2 25.4M14.5 31.6H11.6M21.7 31.6H24.6M15.3 34.4L12.8 36.6M20.9 34.4L23.4 36.6" stroke-width="1.6"/></g><g transform="translate(0 226)" stroke="#868686" stroke-width="1.9" fill="none" color="#868686" stroke-linejoin="round"><rect x="12.7" y="18" width="9.6" height="18.6" rx="1.4"/><rect x="26.4" y="14.1" width="9" height="9" rx="1.4"/><path d="M12.7 27.3H31.5M22.3 27.3V36.6H30.5Q31.9 36.6 31.9 35.2V28.7Q31.9 27.3 30.5 27.3"/></g><circle cx="32.1" cy="259.2" r="8.2" fill="#007ACC" stroke="none"/><g transform="translate(0 274)" stroke="#868686" stroke-width="1.9" fill="none" color="#868686" stroke-linejoin="round"><path d="M34.6 22.5V15.6H12.6V31.4H22.5M17.2 34.7H23.2"/><circle cx="29.8" cy="30.7" r="5.4"/><path d="M27.2 28.8L29.2 30.7L27.2 32.6M32.4 28.8L30.4 30.7L32.4 32.6" stroke-width="1.2"/></g><g transform="translate(0 322)" stroke="#868686" stroke-width="1.9" fill="none" color="#868686" stroke-linejoin="round"><path d="M19 15H28.8M21 15V21.4L15 32.2Q14.3 34.6 16.4 34.6H31.6Q33.7 34.6 33 32.2L27.3 21.4V15M17.4 29H30.6"/></g><g transform="translate(0 370)" stroke="#868686" stroke-width="1.6" fill="none" color="#868686" stroke-linejoin="round"><circle cx="24" cy="24.9" r="10.8"/><path d="M25 16.6L18.3 26.2H23L21.8 33.4L29.6 23.4H24.6Z" fill="currentColor" stroke="none"/></g><g transform="translate(0 914)" stroke="#868686" stroke-width="1.9" fill="none" color="#868686" stroke-linejoin="round"><circle cx="24" cy="23.9" r="11.1"/><circle cx="24" cy="21.2" r="4.7"/><path d="M16.3 31.6C17.6 28.6 20.4 27.6 24 27.6C27.6 27.6 30.4 28.6 31.7 31.6"/></g><g transform="translate(0 962)" stroke="#868686" stroke-width="1.9" fill="none" color="#868686" stroke-linejoin="round"><path d="M32.02 22.07L35.31 22.37L35.31 25.23L32.02 25.53L30.89 28.25L33.01 30.79L30.99 32.81L28.45 30.69L25.73 31.82L25.43 35.11L22.57 35.11L22.27 31.82L19.55 30.69L17.01 32.81L14.99 30.79L17.11 28.25L15.98 25.53L12.69 25.23L12.69 22.37L15.98 22.07L17.11 19.35L14.99 16.81L17.01 14.79L19.55 16.91L22.27 15.78L22.57 12.49L25.43 12.49L25.73 15.78L28.45 16.91L30.99 14.79L33.01 16.81L30.89 19.35Z"/><circle cx="24" cy="23.8" r="2.9"/></g><g stroke="#424242" stroke-width="1" fill="none" color="#424242" ><path d="M124.2 49.6A5.4 5.4 0 1 0 127.6 47.9"/><path d="M121.2 47.4H124.7V50.4"/></g><g stroke="#424242" stroke-width="1" fill="none" color="#424242" ><path d="M145.8 48.3H160M145.8 51.6H160M145.8 54.9H154M145.8 57.8H154M155.3 54.3L159.6 57.9M159.6 54.3L155.3 57.9"/></g><g stroke="#424242" stroke-width="1" fill="none" color="#424242" ><path d="M178 58.6H173.5V46.6H180L183.7 50.3V52.6M180 46.6V50.3H183.7" stroke-linejoin="round"/><path d="M183.4 53.8V61M179.7 57.4H187.1"/></g><g stroke="#424242" stroke-width="1" fill="none" color="#424242" ><path d="M199 48.3H210M199 51.6H211M199 54.9H208M199 57.8H206.8"/></g><g stroke="#424242" stroke-width="1" fill="none" color="#424242" ><rect x="225.8" y="50.9" width="8" height="7.8" rx="1.3"/><path d="M228.6 50.6V49Q228.6 47.8 229.8 47.8H235.2Q236.4 47.8 236.4 49V54.2Q236.4 55.4 235.2 55.4H234.2M227.6 54.8H232"/></g><g stroke="#424242" stroke-width="1" fill="none" color="#424242" ><path d="M200.4 92V94.2H215.8V92"/></g><g stroke="#424242" stroke-width="1" fill="none" color="#424242" ><rect x="223.8" y="91" width="4.2" height="3.9" rx="0" fill="#424242" stroke="none"/><path d="M232.7 84.4V91.2M229.8 86.1L235.6 89.5M235.6 86.1L229.8 89.5" stroke-width="1.3"/></g><g stroke="#424242" stroke-width="1" fill="none" color="#424242" ><path d="M54.0 112.1L58.3 116.5L62.599999999999994 112.1"/></g><g stroke="#424242" stroke-width="1" fill="none" color="#424242" ><rect x="227.5" y="139.9" width="10" height="6" rx="1"/><path d="M229.6 139.6V138.2Q229.6 137 230.8 137H238.8Q240 137 240 138.2V142.6Q240 143.6 239 143.6H237.8"/><path d="M230 142H231.6V144H230ZM233.6 142H235.4M233.6 142V144H235.4" stroke-width=".8"/><path d="M234 133.4H235.4V135.4H234ZM236.8 132.6V135.4H238.2V134H236.8" stroke-width=".8"/><path d="M232.4 133.8H229.4M230.6 132.6L229.3 133.8L230.6 135" stroke-width=".9"/></g><g stroke="#424242" stroke-width="1" fill="none" color="#424242" ><circle cx="226.1" cy="160.2" r="1" stroke="none" fill="currentColor"/><circle cx="231.2" cy="160.2" r="1" stroke="none" fill="currentColor"/><circle cx="236.29999999999998" cy="160.2" r="1" stroke="none" fill="currentColor"/></g><g stroke="#424242" stroke-width="1" fill="none" color="#424242" ><path d="M223.5 181.5H228.6Q230 181.5 230 183V192.4Q230 191.2 228.6 191.2H223.5ZM236.5 181.5H231.4Q230 181.5 230 183V192.4Q230 191.2 231.4 191.2H236.5Z" stroke-linejoin="round"/><path d="M225 183.8H228M225 186.2H228M225 188.6H228M232 183.8H235M232 186.2H235M232 188.6H235" stroke-width=".8"/></g><g stroke="#1e1e1e" stroke-width="1.15" fill="none" color="#1e1e1e" ><path d="M233.03 236.24L234.69 237.06L234.12 238.42L232.37 237.83L231.33 238.87L231.92 240.62L230.56 241.19L229.74 239.53L228.26 239.53L227.44 241.19L226.08 240.62L226.67 238.87L225.63 237.83L223.88 238.42L223.31 237.06L224.97 236.24L224.97 234.76L223.31 233.94L223.88 232.58L225.63 233.17L226.67 232.13L226.08 230.38L227.44 229.81L228.26 231.47L229.74 231.47L230.56 229.81L231.92 230.38L231.33 232.13L232.37 233.17L234.12 232.58L234.69 233.94L233.03 234.76Z" stroke-linejoin="round"/><circle cx="229" cy="235.5" r="1.7"/></g><circle cx="233.6" cy="239.6" r="3.9" fill="#CDE6F7" stroke="none"/><circle cx="233.6" cy="239.6" r="3.2" fill="#1e1e1e" stroke="none"/><path d="M231.6 239.6H235.6" stroke="#fff" stroke-width="1.1"/><g stroke="#424242" stroke-width="1" fill="none" color="#424242" ><path d="M62.4 309.09999999999997L67 313.7L71.6 309.09999999999997"/></g><g transform="translate(81.80 306.40) scale(1)"><path d="M0.3 8.9C0 6.6 0 4.6 0.4 3.1C0.9 1.1 2.3 0 4.2 0H9C11.1 0 12.4 1.5 12.4 3.6V6.4L11.8 6V9H10.4V6.5H9.6V9H8.2V5.6H6V9H4.7V6.5H3.9V9H2.6V5.4H1.7V8.9Z" fill="#9A6FBE" stroke="none"/><path d="M3.6 1.2C5 1.4 5.4 3.4 4.4 5" stroke="#fff" stroke-opacity=".45" stroke-width=".7" fill="none"/></g><g stroke="#424242" stroke-width="1" fill="none" color="#424242" ><path d="M62.4 595.1L67 599.6999999999999L71.6 595.1"/></g><g transform="translate(81.80 592.40) scale(1)"><path d="M0.3 8.9C0 6.6 0 4.6 0.4 3.1C0.9 1.1 2.3 0 4.2 0H9C11.1 0 12.4 1.5 12.4 3.6V6.4L11.8 6V9H10.4V6.5H9.6V9H8.2V5.6H6V9H4.7V6.5H3.9V9H2.6V5.4H1.7V8.9Z" fill="#9A6FBE" stroke="none"/><path d="M3.6 1.2C5 1.4 5.4 3.4 4.4 5" stroke="#fff" stroke-opacity=".45" stroke-width=".7" fill="none"/></g><g stroke="#424242" stroke-width="1" fill="none" color="#424242" ><path d="M62.4 661.1L67 665.6999999999999L71.6 661.1"/></g><g transform="translate(81.80 658.40) scale(1)"><path d="M0.3 8.9C0 6.6 0 4.6 0.4 3.1C0.9 1.1 2.3 0 4.2 0H9C11.1 0 12.4 1.5 12.4 3.6V6.4L11.8 6V9H10.4V6.5H9.6V9H8.2V5.6H6V9H4.7V6.5H3.9V9H2.6V5.4H1.7V8.9Z" fill="#9A6FBE" stroke="none"/><path d="M3.6 1.2C5 1.4 5.4 3.4 4.4 5" stroke="#fff" stroke-opacity=".45" stroke-width=".7" fill="none"/></g><g stroke="#424242" stroke-width="1" fill="none" color="#424242" ><path d="M62.4 727.1L67 731.6999999999999L71.6 727.1"/></g><g transform="translate(81.80 724.40) scale(1)"><path d="M0.3 8.9C0 6.6 0 4.6 0.4 3.1C0.9 1.1 2.3 0 4.2 0H9C11.1 0 12.4 1.5 12.4 3.6V6.4L11.8 6V9H10.4V6.5H9.6V9H8.2V5.6H6V9H4.7V6.5H3.9V9H2.6V5.4H1.7V8.9Z" fill="#9A6FBE" stroke="none"/><path d="M3.6 1.2C5 1.4 5.4 3.4 4.4 5" stroke="#fff" stroke-opacity=".45" stroke-width=".7" fill="none"/></g><g stroke="#424242" stroke-width="1" fill="none" color="#424242" ><rect x="203.6" y="750.3" width="9" height="7.2" rx="1"/><path d="M209.6 752.4H208.4Q207.2 752.4 207.2 753.6V754.2Q207.2 755.4 208.4 755.4H209.6" stroke-width=".9"/><path d="M205 748.6V746.6Q205 745.6 206 745.6H207.6M206.4 744.2L207.8 745.6L206.4 747M203.7 747.4L205 748.7L206.3 747.4" stroke-width=".9"/><path d="M209.6 744V748.2M209.6 746H211Q212 746 212 747.1Q212 748.2 211 748.2H209.6" stroke-width=".9"/></g><g stroke="#424242" stroke-width="1" fill="none" color="#424242" ><path d="M226.7 747L234.7 755M234.7 747L226.7 755"/></g><g transform="translate(267.60 47.30) scale(1)"><path d="M0.3 8.9C0 6.6 0 4.6 0.4 3.1C0.9 1.1 2.3 0 4.2 0H9C11.1 0 12.4 1.5 12.4 3.6V6.4L11.8 6V9H10.4V6.5H9.6V9H8.2V5.6H6V9H4.7V6.5H3.9V9H2.6V5.4H1.7V8.9Z" fill="#9A6FBE" stroke="none"/><path d="M3.6 1.2C5 1.4 5.4 3.4 4.4 5" stroke="#fff" stroke-opacity=".45" stroke-width=".7" fill="none"/></g><g transform="translate(403.20 47.30) scale(1)"><path d="M0.3 8.9C0 6.6 0 4.6 0.4 3.1C0.9 1.1 2.3 0 4.2 0H9C11.1 0 12.4 1.5 12.4 3.6V6.4L11.8 6V9H10.4V6.5H9.6V9H8.2V5.6H6V9H4.7V6.5H3.9V9H2.6V5.4H1.7V8.9Z" fill="#9A6FBE" stroke="none"/><path d="M3.6 1.2C5 1.4 5.4 3.4 4.4 5" stroke="#fff" stroke-opacity=".45" stroke-width=".7" fill="none"/></g><g transform="translate(538.70 47.30) scale(1)"><path d="M0.3 8.9C0 6.6 0 4.6 0.4 3.1C0.9 1.1 2.3 0 4.2 0H9C11.1 0 12.4 1.5 12.4 3.6V6.4L11.8 6V9H10.4V6.5H9.6V9H8.2V5.6H6V9H4.7V6.5H3.9V9H2.6V5.4H1.7V8.9Z" fill="#9A6FBE" stroke="none"/><path d="M3.6 1.2C5 1.4 5.4 3.4 4.4 5" stroke="#fff" stroke-opacity=".45" stroke-width=".7" fill="none"/></g><g stroke="#333" stroke-width="1" fill="none" color="#333" ><path d="M654.8 48.8L663.2 57.2M663.2 48.8L654.8 57.2"/></g><g stroke="#6b6b6b" stroke-width="1" fill="none" color="#6b6b6b" ><path d="M320.45000000000005 77.5L324.75 81.8L320.45000000000005 86.1"/><path d="M426.45000000000005 77.5L430.75 81.8L426.45000000000005 86.1"/></g><g transform="translate(332.80 77.00) scale(1)"><path d="M0.3 8.9C0 6.6 0 4.6 0.4 3.1C0.9 1.1 2.3 0 4.2 0H9C11.1 0 12.4 1.5 12.4 3.6V6.4L11.8 6V9H10.4V6.5H9.6V9H8.2V5.6H6V9H4.7V6.5H3.9V9H2.6V5.4H1.7V8.9Z" fill="#9A6FBE" stroke="none"/><path d="M3.6 1.2C5 1.4 5.4 3.4 4.4 5" stroke="#fff" stroke-opacity=".45" stroke-width=".7" fill="none"/></g><g stroke="#652D90" stroke-width="1" fill="none" color="#652D90" ><path d="M443.5 75.4L449.4 78.2V85L443.5 88.2L437.6 85V78.2ZM437.8 78.3L443.5 81.4L449.2 78.3M443.5 81.4V88" stroke-linejoin="round"/></g><g stroke="#424242" stroke-width="1" fill="none" color="#424242" ><path d="M1827.8 47.4V58.8L1836.6 53.1Z" stroke-linejoin="round"/></g><g stroke="#424242" stroke-width="1" fill="none" color="#424242" ><path d="M1844.2 51.349999999999994L1848 55.25L1851.8 51.349999999999994"/></g><g stroke="#424242" stroke-width="1" fill="none" color="#424242" ><rect x="1865.5" y="47.0" width="12" height="11.200000000000003" rx="1.2"/><path d="M1871 47.0V58.2"/></g><g stroke="#424242" stroke-width="1" fill="none" color="#424242" ><circle cx="1891.9" cy="53" r="1.05" stroke="none" fill="currentColor"/><circle cx="1897" cy="53" r="1.05" stroke="none" fill="currentColor"/><circle cx="1902.1" cy="53" r="1.05" stroke="none" fill="currentColor"/></g><g stroke="#424242" stroke-width="1" fill="none" color="#424242" ><path d="M1666 934.8H1678.8L1677.4 946.8H1664.4Z" stroke-linejoin="round"/><path d="M1667.6 938.2L1670.6 940.8L1667.6 943.4M1671.4 943.8H1675"/></g><g stroke="#424242" stroke-width="1" fill="none" color="#424242" ><path d="M1753.4 934V946.6M1747.1 940.3H1759.7"/></g><g stroke="#424242" stroke-width="1" fill="none" color="#424242" ><path d="M1766.1 939.1L1770 942.9L1773.9 939.1"/></g><g stroke="#424242" stroke-width="1" fill="none" color="#424242" ><rect x="1787.5" y="934.7" width="12" height="11.299999999999955" rx="1.2"/><path d="M1793.4 934.7V946.0"/></g><g stroke="#424242" stroke-width="1" fill="none" color="#424242" ><path d="M1812.8 937H1824.2M1816 936.8V935.4Q1816 934.7 1816.7 934.7H1820.3Q1821 934.7 1821 935.4V936.8M1814.2 937.2V945Q1814.2 946 1815.2 946H1821.8Q1822.8 946 1822.8 945V937.2M1816.6 938.8V944.2M1818.5 938.8V944.2M1820.4 938.8V944.2"/></g><g stroke="#424242" stroke-width="1" fill="none" color="#424242" ><circle cx="1839.3999999999999" cy="941" r="1.05" stroke="none" fill="currentColor"/><circle cx="1844.8" cy="941" r="1.05" stroke="none" fill="currentColor"/><circle cx="1850.2" cy="941" r="1.05" stroke="none" fill="currentColor"/></g><g stroke="#424242" stroke-width="1" fill="none" color="#424242" ><path d="M1866.3 941.9L1871.1 936.9L1875.8999999999999 941.9"/></g><g stroke="#424242" stroke-width="1" fill="none" color="#424242" ><path d="M1892.8 935.9000000000001L1901.3999999999999 944.5M1901.3999999999999 935.9000000000001L1892.8 944.5"/></g><g stroke="#FFFFFF" stroke-width="1" fill="none" color="#FFFFFF" ><path d="M12.6 1019.6L16.6 1023.2L12.6 1026.8M22 1015.4L18 1019L22 1022.6" stroke-width="1.3"/></g><g stroke="#FFFFFF" stroke-width="1.1" fill="none" color="#FFFFFF" ><circle cx="44.2" cy="1016.9" r="1.8"/><circle cx="44.2" cy="1025.7" r="1.8"/><circle cx="50.2" cy="1018.9" r="1.8"/><path d="M44.2 1018.7V1023.9M50.2 1020.7C50.2 1022.6 47.8 1022.4 46.2 1022.7C44.8 1022.9 44.2 1023.2 44.2 1023.9"/></g><g stroke="#FFFFFF" stroke-width="1.15" fill="none" color="#FFFFFF" ><path d="M101.6 1021A5 5 0 0 1 110.6 1018.2M111.4 1021.4A5 5 0 0 1 102.4 1024.2"/><path d="M112.2 1015.8V1019.6H108.4ZM100.8 1026.6V1022.8H104.6Z" fill="#fff" stroke="none"/></g><g stroke="#FFFFFF" stroke-width="1.1" fill="none" color="#FFFFFF" ><circle cx="134.3" cy="1021.3" r="5.8"/><path d="M131.8 1018.8L136.8 1023.8M136.8 1018.8L131.8 1023.8"/></g><g stroke="#FFFFFF" stroke-width="1.1" fill="none" color="#FFFFFF" ><path d="M161.7 1015.8L167.6 1026H155.8Z" stroke-linejoin="round"/><path d="M161.7 1019.4V1022.8M161.7 1023.8V1024.9"/></g><g stroke="#FFFFFF" stroke-width="1.1" fill="none" color="#FFFFFF" ><circle cx="201.7" cy="1021.3" r="5.8"/><path d="M201.7 1020.4V1024.6M201.7 1018V1019.3"/></g><g stroke="#FFFFFF" stroke-width="0.95" fill="none" color="#FFFFFF" ><circle cx="241.7" cy="1019.8" r="1.4"/><path d="M241.7 1021.2L239.2 1026.8M241.7 1021.2L244.2 1026.8M240 1024.8H243.4M239.2 1022.4A3.6 3.6 0 0 1 239.2 1017.2M244.2 1022.4A3.6 3.6 0 0 0 244.2 1017.2M237.4 1024.2A6.2 6.2 0 0 1 237.4 1015.4M246 1024.2A6.2 6.2 0 0 0 246 1015.4"/></g><g stroke="#FFFFFF" stroke-width="1.1" fill="none" color="#FFFFFF" ><circle cx="1798.6" cy="1019.5" r="3.9"/><circle cx="1799.8" cy="1018.3" r="0.7"/><path d="M1795.8 1022.2L1790.4 1027.2H1792.8V1025.6H1794.4V1024H1795.8L1796.8 1023" stroke-linejoin="round"/></g><g stroke="#FFFFFF" stroke-width="1.1" fill="none" color="#FFFFFF" ><circle cx="1826.2" cy="1020.9" r="5.7"/><path d="M1822.2 1024.9L1830.2 1016.9"/></g><g stroke="#FFFFFF" stroke-width="1.1" fill="none" color="#FFFFFF" ><path d="M1898.3 1015.4C1895.9 1015.4 1894.6 1017.2 1894.6 1019.4V1022.6L1893.4 1024.8H1903.2L1902 1022.6V1019.4C1902 1017.2 1900.7 1015.4 1898.3 1015.4ZM1897 1025C1897 1025.9 1897.6 1026.5 1898.3 1026.5C1899 1026.5 1899.6 1025.9 1899.6 1025" stroke-linejoin="round"/></g><path d="M0 24.2V49.4L5.8 43.9L9.4 51.6L13.2 49.9L9.7 42.6H18Z" fill="#000" stroke="#fff" stroke-width="1.5" stroke-linejoin="round"/></svg>
<span class="t s" style="left:180px;top:80px;line-height:18px;font-size:10.5px;color:#333">Aa</span>
<span class="t s" style="left:202.4px;top:78.7px;line-height:18px;font-size:10.5px;color:#555">ab</span>
<span class="t s" style="left:199.7px;top:130.6px;line-height:18px;font-size:10px;color:#7a7a7a">AB</span>
<span class="t s" style="left:29.4px;top:251.2px;line-height:16px;font-size:9.5px;font-weight:bold;color:#fff">2</span>
<svg style="left:1794px;top:92px" width="112" height="830" viewBox="0 0 112 830" shape-rendering="crispEdges">
<rect x="0" y="256" width="112" height="2" fill="#ADD6FF"/><rect x="0" y="258" width="112" height="2" fill="#ADD6FF" opacity=".5"/><rect x="0" y="258" width="27" height="2" fill="#ADD6FF"/><rect x="0" y="260" width="17" height="2" fill="#ADD6FF"/>
<g fill="#E3C27D"><rect x="0" y="0" width="112" height="2"/><rect x="0" y="30" width="112" height="2"/><rect x="0" y="50" width="112" height="2"/><rect x="0" y="80" width="112" height="2"/><rect x="0" y="84" width="112" height="2"/><rect x="0" y="90" width="112" height="2"/><rect x="0" y="102" width="112" height="2"/><rect x="0" y="116" width="112" height="4"/><rect x="0" y="122" width="112" height="2"/><rect x="0" y="136" width="112" height="2"/><rect x="0" y="170" width="112" height="2"/><rect x="0" y="184" width="112" height="2"/><rect x="0" y="204" width="112" height="2"/><rect x="0" y="368" width="112" height="2"/><rect x="0" y="374" width="112" height="2"/><rect x="0" y="404" width="112" height="2"/><rect x="0" y="459" width="112" height="2"/><rect x="0" y="471" width="112" height="2"/><rect x="0" y="521" width="112" height="2"/><rect x="0" y="588" width="112" height="2"/><rect x="0" y="659" width="112" height="2"/></g>
<g fill="#BF8803"><rect x="20" y="0" width="30" height="2"/><rect x="24" y="30" width="18" height="2"/><rect x="34" y="50" width="13" height="2"/><rect x="0" y="80" width="32" height="2"/><rect x="22" y="84" width="28" height="2"/><rect x="40" y="90" width="22" height="2"/><rect x="30" y="102" width="16" height="2"/><rect x="18" y="118" width="50" height="2"/><rect x="0" y="122" width="102" height="2"/><rect x="42" y="136" width="11" height="2"/><rect x="102" y="170" width="10" height="2"/><rect x="14" y="184" width="40" height="2"/><rect x="20" y="204" width="30" height="2"/><rect x="8" y="368" width="70" height="2"/><rect x="30" y="374" width="20" height="2"/><rect x="6" y="404" width="60" height="2"/><rect x="6" y="459" width="80" height="2"/><rect x="4" y="471" width="20" height="2"/><rect x="0" y="521" width="30" height="2"/><rect x="20" y="588" width="20" height="2"/><rect x="10" y="659" width="50" height="2"/></g>
<path d="M0 0.5h3M1 2.5h1M3 2.5h8M12 2.5h2M15 2.5h3M19 2.5h3M23 2.5h7M31 2.5h2M34 2.5h5M40 2.5h2M1 4.5h1M3 4.5h8M12 4.5h8M21 4.5h3M25 4.5h5M31 4.5h3M1 6.5h1M3 6.5h8M12 6.5h2M15 6.5h3M19 6.5h5M25 6.5h2M28 6.5h8M37 6.5h2M40 6.5h5M46 6.5h2M49 6.5h4M54 6.5h6M61 6.5h8M70 6.5h4M75 6.5h3M79 6.5h6M86 6.5h4M91 6.5h2M1 8.5h1M1 10.5h1M3 10.5h6M11 10.5h7M19 10.5h3M23 10.5h3M27 10.5h2M30 10.5h5M36 10.5h2M1 12.5h1M3 12.5h6M11 12.5h8M20 12.5h7M28 12.5h9M38 12.5h9M48 12.5h7M56 12.5h6M63 12.5h5M1 14.5h1M3 14.5h6M11 14.5h5M17 14.5h3M21 14.5h6M28 14.5h9M1 16.5h2M4 24.5h3M8 24.5h7M16 24.5h7M24 24.5h7M32 24.5h9M42 24.5h9M52 24.5h3M56 24.5h3M60 24.5h4M8 30.5h6M15 30.5h4M20 30.5h8M29 30.5h6M36 30.5h8M45 30.5h6M12 46.5h2M15 46.5h3M19 46.5h2M22 46.5h4M27 46.5h3M31 46.5h7M39 46.5h2M42 46.5h3M46 46.5h5M52 46.5h8M61 46.5h4M66 46.5h2M12 52.5h7M20 52.5h4M25 52.5h2M28 52.5h6M35 52.5h3M39 52.5h6M46 52.5h7M54 52.5h4M59 52.5h4M12 62.5h3M16 62.5h8M25 62.5h5M31 62.5h9M41 62.5h4M46 62.5h8M55 62.5h7M63 62.5h3M67 62.5h5M12 78.5h6M19 78.5h2M22 78.5h3M26 78.5h9M36 78.5h2M39 78.5h3M12 88.5h6M19 88.5h3M23 88.5h3M27 88.5h5M33 88.5h3M37 88.5h3M41 88.5h6M48 88.5h3M8 92.5h4M13 92.5h6M20 92.5h4M25 92.5h8M34 92.5h6M41 92.5h8M50 92.5h4M55 92.5h9M65 92.5h7M73 92.5h2M4 102.5h3M8 102.5h6M15 102.5h3M19 102.5h9M29 102.5h2M32 102.5h4M12 120.5h8M21 120.5h7M29 120.5h9M39 120.5h4M44 120.5h6M51 120.5h4M56 120.5h2M59 120.5h8M68 120.5h4M73 120.5h2M8 138.5h2M11 138.5h9M21 138.5h6M28 138.5h3M32 138.5h5M38 138.5h9M48 138.5h6M55 138.5h1M8 142.5h3M12 142.5h9M22 142.5h6M29 142.5h8M38 142.5h5M44 142.5h5M50 142.5h3M54 142.5h1M8 144.5h6M15 144.5h7M23 144.5h4M28 144.5h6M35 144.5h3M39 144.5h7M47 144.5h5M53 144.5h6M8 160.5h4M13 160.5h3M17 160.5h5M23 160.5h9M33 160.5h5M39 160.5h9M49 160.5h7M57 160.5h9M4 172.5h8M13 172.5h8M22 172.5h9M32 172.5h5M4 214.5h29M8 222.5h56M12 234.5h49M12 248.5h54M31 278.5h14M8 280.5h67M12 288.5h4M17 288.5h2M20 288.5h6M27 288.5h4M32 288.5h5M38 288.5h7M46 288.5h7M54 288.5h7M12 296.5h8M21 296.5h9M31 296.5h5M37 296.5h1M12 326.5h6M19 326.5h4M24 326.5h4M29 326.5h3M33 326.5h3M37 326.5h8M46 326.5h6M0 350.5h3M1 352.5h1M3 352.5h4M8 352.5h9M18 352.5h8M27 352.5h3M31 352.5h3M35 352.5h4M40 352.5h7M48 352.5h8M57 352.5h7M65 352.5h3M69 352.5h9M79 352.5h2M1 354.5h1M3 354.5h4M8 354.5h3M12 354.5h7M20 354.5h3M24 354.5h2M27 354.5h1M1 356.5h1M3 356.5h2M6 356.5h3M10 356.5h3M14 356.5h5M20 356.5h4M25 356.5h9M35 356.5h5M1 358.5h1M3 358.5h5M9 358.5h3M13 358.5h7M21 358.5h6M28 358.5h4M33 358.5h7M41 358.5h3M1 360.5h2M4 382.5h2M7 382.5h7M15 382.5h6M22 382.5h3M4 388.5h5M10 388.5h4M15 388.5h9M25 388.5h3M29 388.5h3M33 388.5h4M38 388.5h6M45 388.5h8M54 388.5h6M61 388.5h2M64 388.5h2M67 388.5h6M4 392.5h3M8 392.5h2M11 392.5h5M17 392.5h4M22 392.5h8M31 392.5h5M37 392.5h8M46 392.5h4M51 392.5h6M58 392.5h3M62 392.5h6M69 392.5h2M4 408.5h3M8 408.5h4M13 408.5h7M21 408.5h4M26 408.5h2M4 410.5h2M7 410.5h3M11 410.5h2M14 410.5h3M18 410.5h7M26 410.5h4" stroke="#008000" stroke-opacity="0.7" stroke-width="1.3" fill="none"/>
<path d="M28 18.5h27M4 22.5h6M26 22.5h10M4 26.5h15M13 28.5h15M62 28.5h9M85 28.5h8M14 38.5h15M8 40.5h5M26 42.5h15M46 42.5h5M12 44.5h11M34 44.5h8M20 50.5h12M51 50.5h16M12 54.5h13M41 54.5h8M12 56.5h12M52 56.5h7M12 60.5h12M50 60.5h4M67 60.5h12M4 68.5h16M30 68.5h7M8 70.5h10M43 70.5h7M71 70.5h8M8 72.5h11M15 76.5h13M41 76.5h2M47 76.5h14M83 76.5h10M12 80.5h14M12 82.5h8M30 82.5h11M54 82.5h8M12 84.5h7M32 84.5h7M50 84.5h12M64 84.5h13M12 86.5h16M36 86.5h12M4 96.5h16M13 104.5h5M35 104.5h8M12 106.5h7M35 106.5h16M56 106.5h8M69 106.5h8M12 108.5h11M43 108.5h14M12 110.5h5M12 112.5h16M36 112.5h7M12 114.5h10M35 114.5h9M67 114.5h9M12 116.5h13M34 116.5h6M12 118.5h9M32 118.5h13M20 124.5h7M12 126.5h13M12 128.5h6M58 128.5h6M77 128.5h15M12 130.5h11M12 132.5h15M8 140.5h12M36 140.5h6M18 148.5h12M54 148.5h10M92 148.5h6M8 150.5h11M36 150.5h11M61 150.5h15M78 150.5h5M24 152.5h11M40 152.5h13M12 154.5h11M12 156.5h9M33 156.5h8M8 162.5h13M32 162.5h10M4 166.5h10M31 166.5h5M4 170.5h16M31 170.5h10M65 170.5h11M18 174.5h12M35 174.5h2M17 176.5h8M12 178.5h16M43 178.5h5M50 178.5h5M12 180.5h9M38 180.5h13M12 184.5h13M47 184.5h8M72 184.5h3M79 184.5h8M12 188.5h9M37 188.5h12M62 188.5h8M98 188.5h8M12 190.5h5M35 190.5h12M22 196.5h13M40 196.5h7M51 196.5h10M12 198.5h6M29 198.5h9M49 198.5h12M12 200.5h10M37 200.5h11M79 200.5h6M99 200.5h6M12 202.5h9M38 202.5h16M12 204.5h9M22 210.5h12M39 210.5h4M4 218.5h14M27 218.5h8M63 218.5h5M94 218.5h5M14 220.5h14M8 226.5h14M15 230.5h10M18 232.5h10M12 236.5h14M39 236.5h10M17 238.5h14M78 238.5h14M98 238.5h14M16 240.5h14M93 240.5h14M12 246.5h14M12 250.5h16M21 252.5h16M41 252.5h2M47 252.5h15M16 254.5h14M34 254.5h15M29 256.5h15M12 264.5h14M36 264.5h14M62 264.5h14M8 270.5h8M36 270.5h14M4 276.5h9M22 276.5h8M53 276.5h5M79 276.5h5M100 276.5h8M15 278.5h9M52 278.5h9M8 282.5h7M74 282.5h14M8 284.5h8M88 284.5h7M8 286.5h10M27 286.5h8M59 286.5h5M86 286.5h5M108 286.5h4M12 290.5h14M42 290.5h7M12 292.5h13M12 294.5h6M27 294.5h16M19 300.5h10M57 300.5h9M12 302.5h8M36 302.5h6M53 302.5h8M12 304.5h5M28 304.5h8M12 306.5h8M12 308.5h15M12 310.5h10M32 310.5h9M43 310.5h14M8 316.5h7M20 316.5h2M26 316.5h6M58 316.5h6M69 316.5h4M8 320.5h5M20 322.5h8M33 322.5h3M12 324.5h11M36 324.5h7M45 324.5h3M17 330.5h12M57 330.5h8M12 332.5h7M30 332.5h13M12 336.5h11M4 342.5h7M32 362.5h8M13 366.5h14M8 368.5h15M8 370.5h13M8 372.5h6M4 376.5h11M32 376.5h10M4 378.5h7M19 378.5h13M57 378.5h9M4 380.5h13M25 380.5h8M4 384.5h13M4 390.5h14M62 390.5h13M77 390.5h5M19 396.5h16M40 396.5h7M8 398.5h6M8 402.5h13M59 402.5h13M74 402.5h7M4 406.5h11M31 406.5h13M82 406.5h14M98 406.5h5M11 412.5h16" stroke="#001080" stroke-opacity="0.75" stroke-width="1.3" fill="none"/>
<path d="M9 18.5h18M13 22.5h12M22 26.5h4M56 28.5h5M8 38.5h5M16 40.5h10M15 42.5h10M26 44.5h7M15 50.5h4M46 50.5h4M28 54.5h12M54 54.5h7M27 56.5h4M27 60.5h9M59 60.5h7M84 60.5h11M23 68.5h6M64 70.5h6M22 72.5h4M29 80.5h13M75 80.5h12M23 82.5h6M46 82.5h7M22 84.5h9M44 84.5h5M82 84.5h10M31 86.5h4M23 96.5h10M29 104.5h5M30 106.5h4M26 108.5h8M62 108.5h9M20 110.5h10M31 112.5h4M25 114.5h9M56 114.5h10M28 116.5h5M24 118.5h7M15 124.5h4M28 126.5h4M21 128.5h12M46 128.5h11M69 128.5h7M26 130.5h11M30 132.5h5M23 140.5h12M13 148.5h4M46 148.5h7M22 150.5h13M52 150.5h8M17 152.5h6M26 154.5h13M58 154.5h4M24 156.5h8M24 162.5h7M17 166.5h13M23 170.5h7M46 170.5h8M8 174.5h9M31 178.5h11M60 178.5h8M105 178.5h5M24 180.5h13M42 184.5h4M24 188.5h12M54 188.5h7M84 188.5h13M20 190.5h6M52 190.5h4M12 196.5h9M21 198.5h7M43 198.5h5M25 200.5h11M68 200.5h10M90 200.5h8M24 202.5h13M24 204.5h4M12 210.5h9M21 218.5h5M57 218.5h5M8 220.5h5M12 232.5h5M29 236.5h9M46 238.5h6M53 238.5h13M71 238.5h6M33 240.5h6M40 240.5h13M60 240.5h6M67 240.5h13M86 240.5h6M31 250.5h7M60 250.5h13M20 256.5h8M46 256.5h5M29 264.5h6M55 264.5h6M80 264.5h6M16 276.5h5M47 276.5h5M9 278.5h5M45 278.5h6M25 282.5h10M36 282.5h11M37 284.5h11M75 284.5h12M101 284.5h11M21 286.5h5M53 286.5h5M29 290.5h12M28 292.5h6M21 294.5h5M12 300.5h6M51 300.5h5M23 302.5h12M47 302.5h5M20 304.5h7M23 306.5h9M30 308.5h5M25 310.5h6M49 316.5h8M16 320.5h13M12 322.5h7M26 324.5h9M53 324.5h5M12 330.5h4M22 332.5h7M58 332.5h7M26 336.5h11M56 336.5h8M14 342.5h4M9 362.5h22M26 368.5h9M24 370.5h9M17 372.5h12M18 376.5h13M14 378.5h4M52 378.5h4M20 380.5h4M20 384.5h10M21 390.5h13M57 390.5h4M11 396.5h7M17 398.5h7M24 402.5h10M51 402.5h7M86 402.5h6M18 406.5h12M49 406.5h10M74 406.5h7" stroke="#795E26" stroke-opacity="0.6" stroke-width="1.3" fill="none"/>
<path d="M27 26.5h7M29 28.5h11M46 28.5h6M72 28.5h7M30 38.5h11M27 40.5h12M68 50.5h8M19 70.5h12M37 70.5h2M51 70.5h7M80 70.5h7M29 76.5h6M62 76.5h6M74 76.5h5M98 76.5h5M43 80.5h14M20 106.5h4M35 108.5h6M46 114.5h5M42 116.5h12M33 126.5h13M48 126.5h7M36 132.5h8M65 148.5h9M40 154.5h13M55 170.5h8M26 176.5h12M26 184.5h10M56 184.5h10M88 184.5h9M72 188.5h7M57 190.5h5M62 196.5h5M73 196.5h4M29 204.5h12M36 218.5h15M69 218.5h15M89 218.5h2M100 218.5h12M25 226.5h2M29 232.5h10M50 236.5h10M30 246.5h2M52 254.5h3M52 256.5h13M67 256.5h5M74 256.5h9M85 256.5h10M97 256.5h11M110 256.5h2M87 264.5h3M17 270.5h15M31 276.5h10M59 276.5h10M74 276.5h2M85 276.5h10M109 276.5h3M63 278.5h6M18 282.5h4M48 282.5h3M17 284.5h10M31 284.5h3M70 284.5h3M97 284.5h2M36 286.5h11M65 286.5h11M81 286.5h2M92 286.5h11M51 290.5h4M30 300.5h8M71 300.5h4M33 306.5h5M36 308.5h14M33 316.5h10M59 324.5h8M30 330.5h10M45 332.5h8M77 332.5h11M38 336.5h13M65 336.5h9M19 342.5h10M30 372.5h9M31 384.5h12M25 398.5h4M35 402.5h11M93 402.5h8" stroke="#A31515" stroke-opacity="0.7" stroke-width="1.3" fill="none"/>
<path d="M4 28.5h7M4 38.5h2M8 42.5h5M8 50.5h5M4 70.5h2M8 76.5h5M4 104.5h7M8 106.5h2M8 124.5h5M4 148.5h7M8 152.5h7M4 174.5h2M8 176.5h7M8 184.5h2M8 196.5h2M8 210.5h2M4 220.5h2M8 232.5h2M12 238.5h2M8 246.5h2M12 252.5h7M38 252.5h2M16 256.5h2M20 258.5h5M4 278.5h2M8 300.5h2M4 316.5h2M8 322.5h2M8 330.5h2M4 366.5h7M4 396.5h5M4 412.5h5" stroke="#AF00DB" stroke-opacity="0.7" stroke-width="1.3" fill="none"/>
<path d="M0 18.5h8M38 22.5h10M82 50.5h7M39 68.5h12M59 80.5h11M23 104.5h2M35 148.5h7M79 154.5h10M43 156.5h11M87 178.5h13M63 198.5h11M50 200.5h13M8 230.5h6M36 238.5h4M75 278.5h5M44 300.5h3M46 330.5h7M76 336.5h8M0 362.5h8M32 366.5h2M45 384.5h8M32 412.5h3" stroke="#0000FF" stroke-opacity="0.75" stroke-width="1.3" fill="none"/>
<path d="M11 22.5h1M36 22.5h1M49 22.5h1M20 26.5h1M35 26.5h1M43 28.5h2M53 28.5h2M82 28.5h2M14 40.5h1M40 40.5h1M43 42.5h2M24 44.5h1M43 44.5h1M34 50.5h2M43 50.5h2M79 50.5h2M26 54.5h1M51 54.5h1M62 54.5h17M80 54.5h1M25 56.5h1M32 56.5h18M50 56.5h1M60 56.5h1M25 60.5h1M37 60.5h11M48 60.5h1M56 60.5h2M81 60.5h1M96 60.5h11M108 60.5h1M21 68.5h1M37 68.5h1M52 68.5h1M34 70.5h2M40 70.5h2M61 70.5h2M20 72.5h1M27 72.5h11M39 72.5h1M38 76.5h2M44 76.5h2M71 76.5h2M80 76.5h2M95 76.5h2M27 80.5h1M57 80.5h1M72 80.5h1M88 80.5h10M99 80.5h1M21 82.5h1M43 82.5h1M63 82.5h1M20 84.5h1M41 84.5h1M62 84.5h1M79 84.5h1M93 84.5h12M105 84.5h1M29 86.5h1M49 86.5h1M21 96.5h1M34 96.5h10M45 96.5h1M20 104.5h2M26 104.5h2M27 106.5h2M53 106.5h2M66 106.5h2M24 108.5h1M41 108.5h1M59 108.5h2M72 108.5h8M80 108.5h1M96 108.5h1M18 110.5h1M31 110.5h16M48 110.5h1M29 112.5h1M43 112.5h1M49 112.5h1M23 114.5h1M44 114.5h1M53 114.5h2M77 114.5h1M26 116.5h1M40 116.5h1M55 116.5h1M22 118.5h1M46 118.5h1M26 126.5h1M46 126.5h1M56 126.5h1M19 128.5h1M34 128.5h7M43 128.5h1M66 128.5h1M93 128.5h1M24 130.5h1M38 130.5h10M49 130.5h1M28 132.5h1M44 132.5h1M61 132.5h1M21 140.5h1M43 140.5h1M32 148.5h2M43 148.5h2M77 148.5h2M89 148.5h2M100 148.5h2M20 150.5h1M49 150.5h1M76 150.5h1M84 150.5h1M37 152.5h2M24 154.5h1M55 154.5h2M63 154.5h14M77 154.5h1M90 154.5h1M22 156.5h1M41 156.5h1M55 156.5h1M22 162.5h1M43 162.5h1M15 166.5h1M37 166.5h1M21 170.5h1M43 170.5h2M63 170.5h1M77 170.5h1M32 174.5h2M29 178.5h1M48 178.5h1M57 178.5h1M69 178.5h16M85 178.5h1M102 178.5h1M22 180.5h1M51 180.5h1M64 180.5h1M39 184.5h2M69 184.5h2M76 184.5h2M22 188.5h1M51 188.5h2M70 188.5h1M81 188.5h2M107 188.5h1M18 190.5h1M27 190.5h6M33 190.5h1M49 190.5h2M62 190.5h1M79 190.5h1M37 196.5h2M48 196.5h2M70 196.5h2M19 198.5h1M40 198.5h2M61 198.5h1M75 198.5h1M23 200.5h1M48 200.5h1M65 200.5h1M87 200.5h1M106 200.5h1M22 202.5h1M55 202.5h1M22 204.5h1M42 204.5h1M36 210.5h2M19 218.5h1M54 218.5h1M87 218.5h1M92 218.5h1M23 226.5h1M27 226.5h1M25 230.5h1M27 236.5h1M61 236.5h1M63 236.5h12M76 236.5h1M32 238.5h1M33 238.5h1M34 238.5h1M42 238.5h1M43 238.5h1M68 238.5h1M70 238.5h1M95 238.5h1M96 238.5h1M31 240.5h1M55 240.5h1M58 240.5h1M84 240.5h1M109 240.5h1M27 246.5h1M28 246.5h1M29 250.5h1M39 250.5h19M58 250.5h1M76 250.5h1M44 252.5h1M45 252.5h1M31 254.5h1M32 254.5h1M50 254.5h1M55 254.5h1M44 256.5h1M65 256.5h1M72 256.5h1M83 256.5h1M95 256.5h1M108 256.5h1M25 258.5h1M27 264.5h1M50 264.5h1M53 264.5h1M78 264.5h1M92 264.5h1M34 270.5h1M50 270.5h1M14 276.5h1M44 276.5h1M72 276.5h1M77 276.5h1M98 276.5h1M27 278.5h1M28 278.5h1M61 278.5h1M71 278.5h1M72 278.5h1M73 278.5h1M16 282.5h1M23 282.5h1M51 282.5h1M53 282.5h19M72 282.5h1M90 282.5h1M92 282.5h19M29 284.5h1M35 284.5h1M49 284.5h19M68 284.5h1M73 284.5h1M95 284.5h1M99 284.5h1M19 286.5h1M50 286.5h1M79 286.5h1M84 286.5h1M106 286.5h1M27 290.5h1M49 290.5h1M56 290.5h1M26 292.5h1M35 292.5h7M43 292.5h1M19 294.5h1M44 294.5h1M41 300.5h2M48 300.5h2M68 300.5h2M21 302.5h1M44 302.5h1M62 302.5h1M18 304.5h1M37 304.5h1M21 306.5h1M39 306.5h1M28 308.5h1M51 308.5h1M23 310.5h1M41 310.5h1M58 310.5h1M17 316.5h2M23 316.5h2M46 316.5h2M66 316.5h2M14 320.5h1M30 320.5h12M43 320.5h1M30 322.5h2M24 324.5h1M43 324.5h1M50 324.5h2M68 324.5h1M43 330.5h2M54 330.5h2M20 332.5h1M43 332.5h1M55 332.5h1M66 332.5h9M75 332.5h1M89 332.5h1M24 336.5h1M53 336.5h2M74 336.5h1M85 336.5h1M12 342.5h1M30 342.5h1M29 366.5h2M24 368.5h1M36 368.5h8M45 368.5h1M22 370.5h1M34 370.5h13M48 370.5h1M15 372.5h1M40 372.5h1M16 376.5h1M43 376.5h1M12 378.5h1M32 378.5h1M49 378.5h1M67 378.5h1M18 380.5h1M34 380.5h1M18 384.5h1M43 384.5h1M54 384.5h1M19 390.5h1M35 390.5h17M54 390.5h1M75 390.5h1M83 390.5h1M37 396.5h2M15 398.5h1M29 398.5h1M46 398.5h1M22 402.5h1M48 402.5h2M72 402.5h1M83 402.5h1M101 402.5h1M16 406.5h1M46 406.5h1M60 406.5h9M71 406.5h2M96 406.5h1M104 406.5h1M29 412.5h2" stroke="#333333" stroke-opacity="0.45" stroke-width="1.3" fill="none"/>
<path d="M37 50.5h5M107 84.5h5M82 108.5h13M45 112.5h3M46 132.5h14M80 148.5h8M103 148.5h2M53 180.5h10M64 190.5h14M57 240.5h1M52 264.5h1M34 378.5h13M31 398.5h14M103 402.5h9" stroke="#098658" stroke-opacity="0.6" stroke-width="1.3" fill="none"/>
<path d="M27 18.5h1M0 20.5h1M25 22.5h1M48 22.5h1M26 26.5h1M34 26.5h1M12 28.5h1M28 28.5h1M40 28.5h1M41 28.5h1M61 28.5h1M71 28.5h1M79 28.5h1M80 28.5h1M94 28.5h1M96 28.5h1M4 34.5h1M7 38.5h1M13 38.5h1M29 38.5h1M41 38.5h1M42 38.5h1M44 38.5h1M46 38.5h1M26 40.5h1M39 40.5h1M14 42.5h1M25 42.5h1M41 42.5h1M52 42.5h1M54 42.5h1M33 44.5h1M42 44.5h1M8 48.5h1M14 50.5h1M19 50.5h1M32 50.5h1M50 50.5h1M67 50.5h1M76 50.5h1M77 50.5h1M90 50.5h1M92 50.5h1M40 54.5h1M49 54.5h1M61 54.5h1M79 54.5h1M31 56.5h1M59 56.5h1M36 60.5h1M54 60.5h1M66 60.5h1M79 60.5h1M95 60.5h1M107 60.5h1M8 64.5h1M4 66.5h1M29 68.5h1M51 68.5h1M7 70.5h1M18 70.5h1M31 70.5h1M32 70.5h1M50 70.5h1M58 70.5h1M59 70.5h1M70 70.5h1M79 70.5h1M87 70.5h1M88 70.5h1M90 70.5h1M92 70.5h1M26 72.5h1M38 72.5h1M14 76.5h1M28 76.5h1M35 76.5h1M36 76.5h1M61 76.5h1M68 76.5h1M69 76.5h1M93 76.5h1M104 76.5h1M106 76.5h1M42 80.5h1M70 80.5h1M87 80.5h1M98 80.5h1M29 82.5h1M41 82.5h1M53 82.5h1M62 82.5h1M31 84.5h1M39 84.5h1M49 84.5h1M77 84.5h1M92 84.5h1M35 86.5h1M48 86.5h1M8 90.5h1M4 94.5h1M33 96.5h1M44 96.5h1M12 104.5h1M18 104.5h1M34 104.5h1M43 104.5h1M45 104.5h1M47 104.5h1M11 106.5h1M19 106.5h1M24 106.5h1M25 106.5h1M34 106.5h1M51 106.5h1M64 106.5h1M78 106.5h1M80 106.5h1M34 108.5h1M57 108.5h1M71 108.5h1M95 108.5h1M30 110.5h1M47 110.5h1M35 112.5h1M48 112.5h1M34 114.5h1M51 114.5h1M66 114.5h1M76 114.5h1M33 116.5h1M54 116.5h1M31 118.5h1M45 118.5h1M8 122.5h1M14 124.5h1M19 124.5h1M27 124.5h1M29 124.5h1M31 124.5h1M32 126.5h1M55 126.5h1M33 128.5h1M41 128.5h1M57 128.5h1M64 128.5h1M76 128.5h1M92 128.5h1M37 130.5h1M48 130.5h1M35 132.5h1M60 132.5h1M8 136.5h1M35 140.5h1M42 140.5h1M4 146.5h1M12 148.5h1M17 148.5h1M30 148.5h1M53 148.5h1M64 148.5h1M74 148.5h1M75 148.5h1M98 148.5h1M106 148.5h1M108 148.5h1M35 150.5h1M47 150.5h1M60 150.5h1M83 150.5h1M16 152.5h1M23 152.5h1M35 152.5h1M53 152.5h1M55 152.5h1M57 152.5h1M39 154.5h1M53 154.5h1M62 154.5h1M89 154.5h1M32 156.5h1M54 156.5h1M8 158.5h1M31 162.5h1M42 162.5h1M4 164.5h1M30 166.5h1M36 166.5h1M30 170.5h1M41 170.5h1M54 170.5h1M76 170.5h1M7 174.5h1M17 174.5h1M30 174.5h1M38 174.5h1M40 174.5h1M16 176.5h1M25 176.5h1M38 176.5h1M39 176.5h1M41 176.5h1M43 176.5h1M42 178.5h1M55 178.5h1M68 178.5h1M100 178.5h1M110 178.5h1M37 180.5h1M63 180.5h1M8 182.5h1M11 184.5h1M25 184.5h1M36 184.5h1M37 184.5h1M46 184.5h1M55 184.5h1M66 184.5h1M67 184.5h1M87 184.5h1M97 184.5h1M98 184.5h1M100 184.5h1M102 184.5h1M36 188.5h1M49 188.5h1M61 188.5h1M79 188.5h1M97 188.5h1M106 188.5h1M26 190.5h1M47 190.5h1M56 190.5h1M78 190.5h1M8 194.5h1M11 196.5h1M21 196.5h1M35 196.5h1M61 196.5h1M67 196.5h1M68 196.5h1M78 196.5h1M80 196.5h1M28 198.5h1M38 198.5h1M48 198.5h1M74 198.5h1M36 200.5h1M63 200.5h1M78 200.5h1M85 200.5h1M98 200.5h1M105 200.5h1M37 202.5h1M54 202.5h1M28 204.5h1M41 204.5h1M8 206.5h1M11 210.5h1M21 210.5h1M34 210.5h1M44 210.5h1M46 210.5h1M26 218.5h1M35 218.5h1M51 218.5h1M52 218.5h1M56 218.5h1M62 218.5h1M68 218.5h1M84 218.5h1M85 218.5h1M99 218.5h1M7 220.5h1M13 220.5h1M28 220.5h1M29 220.5h1M31 220.5h1M11 232.5h1M17 232.5h1M28 232.5h1M39 232.5h1M40 232.5h1M41 232.5h1M43 232.5h1M38 236.5h1M49 236.5h1M60 236.5h1M75 236.5h1M15 238.5h1M16 238.5h1M40 238.5h1M45 238.5h1M52 238.5h1M66 238.5h1M67 238.5h1M77 238.5h1M92 238.5h1M93 238.5h1M39 240.5h1M53 240.5h1M54 240.5h1M66 240.5h1M80 240.5h1M81 240.5h1M82 240.5h1M92 240.5h1M107 240.5h1M108 240.5h1M12 242.5h1M8 244.5h1M11 246.5h1M32 246.5h1M34 246.5h1M38 250.5h1M73 250.5h1M74 250.5h1M75 250.5h1M20 252.5h1M62 252.5h1M64 252.5h1M19 256.5h1M28 256.5h1M51 256.5h1M16 260.5h1M12 262.5h1M35 264.5h1M61 264.5h1M76 264.5h1M86 264.5h1M90 264.5h1M91 264.5h1M8 266.5h1M16 270.5h1M32 270.5h1M4 272.5h1M21 276.5h1M30 276.5h1M41 276.5h1M42 276.5h1M46 276.5h1M52 276.5h1M58 276.5h1M69 276.5h1M70 276.5h1M84 276.5h1M95 276.5h1M96 276.5h1M108 276.5h1M7 278.5h1M8 278.5h1M14 278.5h1M24 278.5h1M25 278.5h1M30 278.5h1M51 278.5h1M69 278.5h1M80 278.5h1M81 278.5h1M83 278.5h1M35 282.5h1M47 282.5h1M88 282.5h1M16 284.5h1M27 284.5h1M48 284.5h1M87 284.5h1M26 286.5h1M35 286.5h1M47 286.5h1M48 286.5h1M52 286.5h1M58 286.5h1M64 286.5h1M76 286.5h1M77 286.5h1M91 286.5h1M103 286.5h1M104 286.5h1M41 290.5h1M55 290.5h1M34 292.5h1M42 292.5h1M26 294.5h1M43 294.5h1M8 298.5h1M11 300.5h1M18 300.5h1M29 300.5h1M38 300.5h1M39 300.5h1M56 300.5h1M66 300.5h1M76 300.5h1M78 300.5h1M35 302.5h1M42 302.5h1M52 302.5h1M61 302.5h1M27 304.5h1M36 304.5h1M32 306.5h1M38 306.5h1M35 308.5h1M50 308.5h1M31 310.5h1M57 310.5h1M8 312.5h1M4 314.5h1M7 316.5h1M15 316.5h1M32 316.5h1M43 316.5h1M44 316.5h1M57 316.5h1M64 316.5h1M74 316.5h1M76 316.5h1M29 320.5h1M42 320.5h1M11 322.5h1M19 322.5h1M28 322.5h1M37 322.5h1M39 322.5h1M35 324.5h1M48 324.5h1M58 324.5h1M67 324.5h1M8 328.5h1M11 330.5h1M16 330.5h1M29 330.5h1M40 330.5h1M41 330.5h1M65 330.5h1M67 330.5h1M69 330.5h1M29 332.5h1M53 332.5h1M65 332.5h1M88 332.5h1M37 336.5h1M51 336.5h1M64 336.5h1M84 336.5h1M8 338.5h1M4 340.5h1M18 342.5h1M29 342.5h1M0 346.5h1M31 362.5h1M0 364.5h1M12 366.5h1M27 366.5h1M35 366.5h1M37 366.5h1M35 368.5h1M44 368.5h1M33 370.5h1M47 370.5h1M29 372.5h1M39 372.5h1M4 374.5h1M31 376.5h1M42 376.5h1M18 378.5h1M47 378.5h1M56 378.5h1M66 378.5h1M24 380.5h1M33 380.5h1M30 384.5h1M53 384.5h1M34 390.5h1M52 390.5h1M61 390.5h1M82 390.5h1M10 396.5h1M18 396.5h1M35 396.5h1M48 396.5h1M50 396.5h1M24 398.5h1M45 398.5h1M34 402.5h1M46 402.5h1M58 402.5h1M81 402.5h1M92 402.5h1M4 404.5h1M30 406.5h1M44 406.5h1M59 406.5h1M69 406.5h1M81 406.5h1M103 406.5h1M10 412.5h1M27 412.5h1M36 412.5h1M38 412.5h1" stroke="#0431FA" stroke-opacity="0.5" stroke-width="1.3" fill="none"/>
<path d="M1 414.5h1M3 414.5h6M10 414.5h7M18 414.5h8M27 414.5h3M31 414.5h6M38 414.5h5M44 414.5h5M50 414.5h8M59 414.5h3M63 414.5h7M1 416.5h1M3 416.5h6M10 416.5h9M20 416.5h7M28 416.5h9M38 416.5h8M47 416.5h3M51 416.5h3M55 416.5h4M60 416.5h2M1 418.5h1M1 420.5h1M3 420.5h6M11 420.5h4M16 420.5h4M21 420.5h5M27 420.5h8M36 420.5h2M39 420.5h9M49 420.5h3M53 420.5h3M57 420.5h5M63 420.5h2M66 420.5h4M1 422.5h1M3 422.5h6M11 422.5h8M20 422.5h8M29 422.5h3M1 424.5h1M3 424.5h6M11 424.5h8M20 424.5h4M25 424.5h5M31 424.5h4M36 424.5h8M45 424.5h2M1 426.5h2M12 458.5h4M17 458.5h8M26 458.5h9M36 458.5h3M40 458.5h9M50 458.5h1M12 472.5h6M19 472.5h2M22 472.5h7M30 472.5h4M35 472.5h2M8 480.5h5M14 480.5h5M20 480.5h5M26 480.5h2M29 480.5h3M33 480.5h6M40 480.5h6M12 492.5h4M17 492.5h2M20 492.5h9M30 492.5h8M39 492.5h2M42 492.5h9M52 492.5h2M12 494.5h7M20 494.5h7M28 494.5h9M38 494.5h2M41 494.5h6M8 518.5h2M11 518.5h7M19 518.5h6M26 518.5h9M36 518.5h3M8 570.5h2M11 570.5h9M21 570.5h2M24 570.5h6M31 570.5h3M35 570.5h5M41 570.5h7M49 570.5h3M0 598.5h3M1 600.5h1M3 600.5h3M7 600.5h7M15 600.5h3M19 600.5h8M28 600.5h6M35 600.5h2M38 600.5h8M47 600.5h9M57 600.5h6M64 600.5h9M1 602.5h2M0 620.5h3M1 622.5h1M3 622.5h8M12 622.5h8M21 622.5h3M25 622.5h6M32 622.5h3M36 622.5h9M46 622.5h9M56 622.5h8M65 622.5h8M74 622.5h2M77 622.5h4M82 622.5h6M89 622.5h3M1 624.5h1M1 626.5h1M3 626.5h6M11 626.5h4M16 626.5h5M22 626.5h5M1 628.5h1M3 628.5h6M11 628.5h6M18 628.5h5M24 628.5h5M30 628.5h2M33 628.5h7M1 630.5h2M8 640.5h9M18 640.5h6M25 640.5h7M33 640.5h8M42 640.5h3M12 646.5h8M21 646.5h9M31 646.5h2M34 646.5h7M42 646.5h6M49 646.5h8M12 674.5h8M21 674.5h6M28 674.5h7M36 674.5h5M42 674.5h3M46 674.5h4M4 762.5h4M9 762.5h6M16 762.5h8M25 762.5h8M12 770.5h6M19 770.5h9M29 770.5h3M33 770.5h8M42 770.5h8M12 772.5h7M20 772.5h2M23 772.5h3M27 772.5h7M35 772.5h6M8 790.5h2M11 790.5h5M17 790.5h4M22 790.5h3M26 790.5h8M35 790.5h4M40 790.5h6M47 790.5h2M50 790.5h2M4 794.5h2M7 794.5h8M16 794.5h8M25 794.5h6M0 804.5h3M1 806.5h1M3 806.5h6M10 806.5h3M14 806.5h8M23 806.5h7M31 806.5h9M41 806.5h5M47 806.5h3M1 808.5h1M1 810.5h1M3 810.5h6M11 810.5h8M20 810.5h6M27 810.5h5M1 812.5h1M3 812.5h6M11 812.5h6M18 812.5h5M24 812.5h7M32 812.5h3M36 812.5h8M45 812.5h9M55 812.5h8M1 814.5h1M3 814.5h6M11 814.5h8M20 814.5h7M28 814.5h9M38 814.5h3M42 814.5h2M45 814.5h3M1 816.5h2M4 826.5h7M12 826.5h5M18 826.5h7M26 826.5h7M34 826.5h6" stroke="#008000" stroke-opacity="0.55" stroke-width="1.15" fill="none"/>
<path d="M28 428.5h17M14 438.5h10M8 440.5h9M27 440.5h13M68 440.5h14M15 442.5h5M12 444.5h11M36 444.5h10M12 446.5h7M49 446.5h7M12 448.5h10M39 448.5h8M21 452.5h6M12 454.5h16M78 454.5h11M91 454.5h9M12 456.5h7M12 460.5h14M15 464.5h11M43 464.5h11M12 466.5h8M35 466.5h11M12 468.5h6M12 470.5h16M12 474.5h12M34 474.5h14M72 474.5h12M86 474.5h10M12 476.5h16M12 482.5h7M44 482.5h6M62 482.5h9M12 486.5h7M31 486.5h15M12 488.5h6M26 488.5h14M12 490.5h6M29 490.5h9M11 502.5h7M18 504.5h14M44 504.5h7M12 510.5h5M8 524.5h8M8 532.5h14M44 532.5h13M74 532.5h5M83 532.5h5M8 536.5h6M25 536.5h6M8 538.5h10M29 538.5h11M12 540.5h8M48 540.5h7M89 540.5h15M12 544.5h5M8 554.5h6M21 560.5h10M59 560.5h8M98 560.5h11M8 564.5h16M38 564.5h8M8 568.5h7M28 568.5h9M39 568.5h12M12 572.5h9M12 574.5h10M34 574.5h11M12 578.5h6M26 604.5h6M4 608.5h10M4 610.5h10M18 632.5h11M11 636.5h13M8 638.5h6M40 638.5h6M8 642.5h15M44 642.5h5M12 644.5h9M39 644.5h7M13 654.5h9M50 654.5h7M20 656.5h14M12 660.5h7M31 660.5h15M12 662.5h15M12 664.5h10M31 664.5h5M12 666.5h7M31 666.5h15M15 670.5h8M34 670.5h6M45 670.5h11M12 676.5h13M33 676.5h5M12 678.5h6M31 678.5h8M8 682.5h5M29 682.5h5M8 684.5h9M53 684.5h3M67 684.5h5M8 686.5h13M32 686.5h10M26 688.5h15M54 688.5h11M86 688.5h8M12 692.5h9M43 692.5h14M12 694.5h16M47 694.5h5M12 696.5h7M27 696.5h5M12 698.5h13M12 702.5h12M39 702.5h16M8 708.5h10M23 708.5h5M54 708.5h14M8 710.5h14M37 710.5h12M8 712.5h8M8 716.5h9M34 716.5h10M23 718.5h13M49 718.5h6M12 722.5h6M8 726.5h8M30 726.5h9M8 728.5h6M11 732.5h7M18 734.5h14M60 734.5h8M12 738.5h5M53 738.5h7M86 738.5h9M12 742.5h8M12 744.5h11M12 746.5h7M28 746.5h16M8 750.5h6M8 752.5h12M8 754.5h10M4 764.5h6M15 766.5h7M17 768.5h15M43 768.5h15M93 768.5h7M8 784.5h14M53 784.5h8M78 784.5h3M8 788.5h6M24 788.5h14M34 818.5h5M4 822.5h10M4 824.5h8M28 824.5h5M4 828.5h14M28 828.5h13" stroke="#001080" stroke-opacity="0.58" stroke-width="1.15" fill="none"/>
<path d="M9 428.5h18M8 438.5h5M20 440.5h6M45 440.5h9M26 444.5h9M22 446.5h13M25 448.5h5M12 452.5h8M31 454.5h13M73 454.5h4M22 456.5h13M29 460.5h10M55 460.5h10M23 466.5h11M21 468.5h7M31 470.5h9M58 470.5h7M80 470.5h5M27 474.5h6M62 474.5h9M31 476.5h9M22 486.5h8M21 488.5h4M21 490.5h7M12 504.5h5M20 510.5h6M19 524.5h13M36 532.5h7M17 536.5h7M21 538.5h7M45 538.5h9M39 540.5h8M81 540.5h7M20 544.5h9M17 554.5h6M13 560.5h7M50 560.5h8M91 560.5h6M27 564.5h10M18 568.5h9M25 574.5h8M21 578.5h10M9 604.5h16M17 608.5h8M17 610.5h4M9 632.5h8M17 638.5h7M26 642.5h7M12 656.5h7M22 660.5h8M30 662.5h6M25 664.5h5M22 666.5h8M28 670.5h5M28 676.5h4M21 678.5h9M16 682.5h12M20 684.5h13M61 684.5h5M24 686.5h7M17 688.5h8M46 688.5h7M80 688.5h5M24 692.5h9M31 694.5h8M22 696.5h4M28 698.5h4M27 702.5h11M45 708.5h8M25 710.5h11M19 712.5h12M20 716.5h13M15 718.5h7M21 722.5h4M19 726.5h10M17 728.5h11M12 734.5h5M50 734.5h9M20 738.5h9M45 738.5h7M79 738.5h6M23 742.5h5M26 744.5h5M22 746.5h5M17 750.5h8M23 752.5h10M21 754.5h11M13 764.5h5M28 764.5h5M8 766.5h6M82 768.5h10M42 784.5h10M17 788.5h6M43 788.5h13M9 818.5h24M17 822.5h7M15 824.5h12M21 828.5h6" stroke="#795E26" stroke-opacity="0.47" stroke-width="1.15" fill="none"/>
<path d="M25 438.5h11M55 440.5h11M36 446.5h11M28 452.5h10M45 454.5h15M40 460.5h10M27 464.5h4M29 468.5h13M44 468.5h6M66 470.5h9M86 470.5h5M50 474.5h7M20 482.5h11M76 482.5h7M19 502.5h10M37 504.5h3M52 504.5h4M27 510.5h11M33 524.5h3M27 532.5h5M58 532.5h10M55 538.5h16M21 540.5h4M56 540.5h10M24 554.5h15M41 554.5h6M32 560.5h12M68 560.5h7M110 560.5h2M22 572.5h10M38 572.5h5M22 610.5h6M25 638.5h13M34 642.5h8M22 644.5h11M23 654.5h9M39 656.5h3M37 662.5h4M57 670.5h9M70 688.5h6M95 688.5h9M34 692.5h7M40 694.5h5M46 698.5h12M29 708.5h10M69 708.5h11M32 712.5h11M37 718.5h6M56 718.5h6M26 722.5h7M23 732.5h4M33 734.5h11M29 742.5h14M32 744.5h9M34 752.5h10M33 754.5h7M42 754.5h14M19 764.5h4M34 764.5h3M23 766.5h9M38 766.5h7M37 768.5h2M59 768.5h7M105 768.5h7M23 784.5h7M62 784.5h10M57 788.5h16M25 822.5h14M35 824.5h12" stroke="#A31515" stroke-opacity="0.55" stroke-width="1.15" fill="none"/>
<path d="M4 438.5h2M8 442.5h5M8 452.5h2M8 464.5h5M8 482.5h2M4 502.5h5M8 504.5h2M4 532.5h2M8 540.5h2M4 560.5h7M8 572.5h2M4 636.5h5M8 644.5h2M4 654.5h7M8 656.5h2M8 670.5h5M8 688.5h7M4 708.5h2M8 718.5h5M4 732.5h5M8 734.5h2M4 766.5h2M8 768.5h7M4 784.5h2" stroke="#AF00DB" stroke-opacity="0.55" stroke-width="1.15" fill="none"/>
<path d="M0 428.5h8M42 438.5h5M25 442.5h2M48 444.5h4M44 452.5h7M62 454.5h6M93 470.5h11M37 482.5h3M55 482.5h3M48 486.5h4M42 488.5h7M31 540.5h4M81 560.5h6M0 604.5h8M0 632.5h8M38 654.5h8M62 654.5h7M48 666.5h9M73 734.5h7M62 738.5h12M43 744.5h12M72 768.5h6M0 818.5h8" stroke="#0000FF" stroke-opacity="0.58" stroke-width="1.15" fill="none"/>
<path d="M39 438.5h2M18 440.5h1M42 440.5h1M66 440.5h1M83 440.5h1M22 442.5h2M24 444.5h1M46 444.5h1M53 444.5h1M20 446.5h1M47 446.5h1M57 446.5h1M23 448.5h1M31 448.5h6M37 448.5h1M48 448.5h1M41 452.5h2M29 454.5h1M60 454.5h1M70 454.5h2M89 454.5h1M101 454.5h1M20 456.5h1M36 456.5h6M43 456.5h1M27 460.5h1M52 460.5h2M66 460.5h7M74 460.5h1M34 464.5h2M40 464.5h2M56 464.5h2M21 466.5h1M47 466.5h1M19 468.5h1M42 468.5h1M51 468.5h1M29 470.5h1M41 470.5h12M55 470.5h1M77 470.5h1M91 470.5h1M105 470.5h1M25 474.5h1M48 474.5h1M59 474.5h2M84 474.5h1M97 474.5h1M29 476.5h1M41 476.5h11M53 476.5h1M34 482.5h2M41 482.5h2M52 482.5h2M59 482.5h2M73 482.5h2M20 486.5h1M46 486.5h1M53 486.5h1M19 488.5h1M40 488.5h1M50 488.5h1M19 490.5h1M39 490.5h1M32 502.5h2M34 504.5h2M41 504.5h2M18 510.5h1M39 510.5h1M17 524.5h1M36 524.5h1M49 524.5h1M24 532.5h2M33 532.5h2M71 532.5h2M80 532.5h2M15 536.5h1M32 536.5h1M19 538.5h1M42 538.5h1M72 538.5h1M28 540.5h2M36 540.5h2M69 540.5h2M78 540.5h2M18 544.5h1M30 544.5h15M45 544.5h1M53 544.5h1M15 554.5h1M39 554.5h1M48 554.5h1M47 560.5h2M78 560.5h2M88 560.5h2M25 564.5h1M47 564.5h1M16 568.5h1M37 568.5h1M52 568.5h1M35 572.5h2M23 574.5h1M45 574.5h1M53 574.5h1M19 578.5h1M32 578.5h13M46 578.5h1M15 608.5h1M26 608.5h8M35 608.5h1M15 610.5h1M29 610.5h1M15 638.5h1M38 638.5h1M47 638.5h1M24 642.5h1M42 642.5h1M50 642.5h1M36 644.5h2M35 654.5h2M47 654.5h2M59 654.5h2M36 656.5h2M20 660.5h1M47 660.5h1M28 662.5h1M42 662.5h1M23 664.5h1M37 664.5h1M20 666.5h1M46 666.5h1M58 666.5h1M25 670.5h2M42 670.5h2M26 676.5h1M39 676.5h1M19 678.5h1M40 678.5h1M14 682.5h1M34 682.5h1M49 682.5h1M18 684.5h1M34 684.5h17M51 684.5h1M58 684.5h1M73 684.5h1M22 686.5h1M42 686.5h1M56 686.5h1M43 688.5h2M67 688.5h2M77 688.5h2M107 688.5h2M22 692.5h1M41 692.5h1M58 692.5h1M29 694.5h1M45 694.5h1M53 694.5h1M20 696.5h1M33 696.5h1M26 698.5h1M33 698.5h11M44 698.5h1M59 698.5h1M25 702.5h1M56 702.5h1M20 708.5h2M42 708.5h2M23 710.5h1M50 710.5h1M17 712.5h1M44 712.5h1M18 716.5h1M44 716.5h1M57 716.5h1M46 718.5h2M19 722.5h1M34 722.5h1M17 726.5h1M40 726.5h1M15 728.5h1M29 728.5h7M37 728.5h1M20 732.5h2M47 734.5h2M70 734.5h2M18 738.5h1M30 738.5h10M42 738.5h1M60 738.5h1M76 738.5h1M96 738.5h1M21 742.5h1M44 742.5h1M24 744.5h1M41 744.5h1M56 744.5h1M20 746.5h1M45 746.5h1M15 750.5h1M26 750.5h7M34 750.5h1M21 752.5h1M45 752.5h1M19 754.5h1M40 754.5h1M57 754.5h1M11 764.5h1M25 764.5h1M37 764.5h1M54 764.5h1M35 766.5h2M34 768.5h2M40 768.5h2M69 768.5h2M79 768.5h2M102 768.5h2M33 784.5h2M39 784.5h2M75 784.5h2M15 788.5h1M40 788.5h2M74 788.5h1M15 822.5h1M39 822.5h1M50 822.5h1M13 824.5h1M33 824.5h1M48 824.5h1M19 828.5h1M42 828.5h1" stroke="#333333" stroke-opacity="0.35" stroke-width="1.15" fill="none"/>
<path d="M37 464.5h2M59 464.5h8M35 502.5h5M38 524.5h10M72 540.5h5M47 544.5h5M47 574.5h5M36 682.5h12M44 686.5h11M110 688.5h2M46 716.5h10M39 764.5h14M36 784.5h2M41 822.5h8" stroke="#098658" stroke-opacity="0.47" stroke-width="1.15" fill="none"/>
<path d="M27 428.5h1M0 430.5h1M7 438.5h1M13 438.5h1M24 438.5h1M36 438.5h1M37 438.5h1M48 438.5h1M50 438.5h1M26 440.5h1M40 440.5h1M54 440.5h1M82 440.5h1M14 442.5h1M20 442.5h1M28 442.5h1M30 442.5h1M35 444.5h1M52 444.5h1M35 446.5h1M56 446.5h1M30 448.5h1M47 448.5h1M8 450.5h1M11 452.5h1M20 452.5h1M27 452.5h1M38 452.5h1M39 452.5h1M52 452.5h1M54 452.5h1M44 454.5h1M68 454.5h1M77 454.5h1M100 454.5h1M35 456.5h1M42 456.5h1M39 460.5h1M50 460.5h1M65 460.5h1M73 460.5h1M8 462.5h1M14 464.5h1M26 464.5h1M31 464.5h1M32 464.5h1M54 464.5h1M68 464.5h1M70 464.5h1M34 466.5h1M46 466.5h1M28 468.5h1M50 468.5h1M40 470.5h1M53 470.5h1M65 470.5h1M75 470.5h1M85 470.5h1M104 470.5h1M33 474.5h1M57 474.5h1M71 474.5h1M96 474.5h1M40 476.5h1M52 476.5h1M8 478.5h1M11 482.5h1M19 482.5h1M31 482.5h1M32 482.5h1M50 482.5h1M71 482.5h1M84 482.5h1M86 482.5h1M30 486.5h1M52 486.5h1M25 488.5h1M49 488.5h1M28 490.5h1M38 490.5h1M8 496.5h1M4 498.5h1M10 502.5h1M18 502.5h1M29 502.5h1M30 502.5h1M41 502.5h1M43 502.5h1M11 504.5h1M17 504.5h1M32 504.5h1M51 504.5h1M56 504.5h1M57 504.5h1M59 504.5h1M61 504.5h1M26 510.5h1M38 510.5h1M8 516.5h1M32 524.5h1M48 524.5h1M4 530.5h1M7 532.5h1M22 532.5h1M43 532.5h1M57 532.5h1M68 532.5h1M69 532.5h1M88 532.5h1M90 532.5h1M92 532.5h1M24 536.5h1M31 536.5h1M28 538.5h1M40 538.5h1M54 538.5h1M71 538.5h1M11 540.5h1M20 540.5h1M25 540.5h1M26 540.5h1M47 540.5h1M55 540.5h1M66 540.5h1M67 540.5h1M88 540.5h1M104 540.5h1M106 540.5h1M108 540.5h1M29 544.5h1M52 544.5h1M8 548.5h1M23 554.5h1M47 554.5h1M4 556.5h1M12 560.5h1M20 560.5h1M31 560.5h1M44 560.5h1M45 560.5h1M58 560.5h1M67 560.5h1M75 560.5h1M76 560.5h1M97 560.5h1M109 560.5h1M37 564.5h1M46 564.5h1M27 568.5h1M51 568.5h1M11 572.5h1M21 572.5h1M32 572.5h1M33 572.5h1M44 572.5h1M46 572.5h1M33 574.5h1M52 574.5h1M31 578.5h1M45 578.5h1M8 584.5h1M4 586.5h1M0 594.5h1M25 604.5h1M0 606.5h1M25 608.5h1M34 608.5h1M21 610.5h1M28 610.5h1M0 616.5h1M17 632.5h1M0 634.5h1M10 636.5h1M24 636.5h1M26 636.5h1M28 636.5h1M24 638.5h1M46 638.5h1M33 642.5h1M49 642.5h1M11 644.5h1M21 644.5h1M33 644.5h1M34 644.5h1M47 644.5h1M49 644.5h1M8 650.5h1M4 652.5h1M12 654.5h1M22 654.5h1M32 654.5h1M33 654.5h1M57 654.5h1M70 654.5h1M72 654.5h1M11 656.5h1M19 656.5h1M34 656.5h1M43 656.5h1M45 656.5h1M30 660.5h1M46 660.5h1M36 662.5h1M41 662.5h1M30 664.5h1M36 664.5h1M30 666.5h1M57 666.5h1M8 668.5h1M14 670.5h1M23 670.5h1M33 670.5h1M40 670.5h1M56 670.5h1M66 670.5h1M67 670.5h1M69 670.5h1M71 670.5h1M32 676.5h1M38 676.5h1M30 678.5h1M39 678.5h1M8 680.5h1M28 682.5h1M48 682.5h1M33 684.5h1M56 684.5h1M66 684.5h1M72 684.5h1M31 686.5h1M55 686.5h1M16 688.5h1M25 688.5h1M41 688.5h1M53 688.5h1M65 688.5h1M85 688.5h1M94 688.5h1M104 688.5h1M105 688.5h1M33 692.5h1M57 692.5h1M39 694.5h1M52 694.5h1M26 696.5h1M32 696.5h1M32 698.5h1M58 698.5h1M38 702.5h1M55 702.5h1M8 704.5h1M4 706.5h1M7 708.5h1M18 708.5h1M28 708.5h1M39 708.5h1M40 708.5h1M53 708.5h1M68 708.5h1M80 708.5h1M81 708.5h1M83 708.5h1M85 708.5h1M36 710.5h1M49 710.5h1M31 712.5h1M43 712.5h1M33 716.5h1M56 716.5h1M14 718.5h1M22 718.5h1M36 718.5h1M43 718.5h1M44 718.5h1M55 718.5h1M62 718.5h1M63 718.5h1M65 718.5h1M67 718.5h1M25 722.5h1M33 722.5h1M8 724.5h1M29 726.5h1M39 726.5h1M28 728.5h1M36 728.5h1M4 730.5h1M10 732.5h1M18 732.5h1M28 732.5h1M30 732.5h1M11 734.5h1M17 734.5h1M32 734.5h1M44 734.5h1M45 734.5h1M59 734.5h1M68 734.5h1M81 734.5h1M83 734.5h1M29 738.5h1M40 738.5h1M52 738.5h1M74 738.5h1M85 738.5h1M95 738.5h1M28 742.5h1M43 742.5h1M31 744.5h1M55 744.5h1M27 746.5h1M44 746.5h1M8 748.5h1M25 750.5h1M33 750.5h1M33 752.5h1M44 752.5h1M32 754.5h1M56 754.5h1M4 756.5h1M18 764.5h1M23 764.5h1M33 764.5h1M53 764.5h1M7 766.5h1M14 766.5h1M22 766.5h1M32 766.5h1M33 766.5h1M46 766.5h1M48 766.5h1M16 768.5h1M32 768.5h1M58 768.5h1M66 768.5h1M67 768.5h1M92 768.5h1M100 768.5h1M8 774.5h1M4 780.5h1M7 784.5h1M22 784.5h1M30 784.5h1M31 784.5h1M52 784.5h1M61 784.5h1M72 784.5h1M73 784.5h1M82 784.5h1M84 784.5h1M23 788.5h1M38 788.5h1M56 788.5h1M73 788.5h1M4 792.5h1M0 800.5h1M33 818.5h1M0 820.5h1M24 822.5h1M49 822.5h1M27 824.5h1M47 824.5h1M27 828.5h1M41 828.5h1" stroke="#0431FA" stroke-opacity="0.39" stroke-width="1.15" fill="none"/>
</svg>
<div class="r" style="left:1906px;top:92px;width:1px;height:830px;background:#E4E4E4"></div>
<div class="r" style="left:1906px;top:319px;width:14px;height:20px;background:#64646466"></div><div class="r" style="left:1907px;top:328px;width:13px;height:2px;background:#424242"></div>
<div class="r" style="left:1916px;top:112px;width:4px;height:6px;background:#BF8803"></div><div class="r" style="left:1916px;top:152px;width:4px;height:8px;background:#BF8803"></div><div class="r" style="left:1916px;top:200px;width:4px;height:5.800000000000011px;background:#BF8803"></div><div class="r" style="left:1916px;top:212px;width:4px;height:6px;background:#BF8803"></div><div class="r" style="left:1916px;top:221.2px;width:4px;height:15.800000000000011px;background:#BF8803"></div><div class="r" style="left:1916px;top:250px;width:4px;height:13px;background:#BF8803"></div><div class="r" style="left:1916px;top:268px;width:4px;height:48.69999999999999px;background:#BF8803"></div><div class="r" style="left:1916px;top:349px;width:4px;height:12.699999999999989px;background:#BF8803"></div><div class="r" style="left:1916px;top:368px;width:4px;height:7.800000000000011px;background:#BF8803"></div><div class="r" style="left:1916px;top:381px;width:4px;height:6px;background:#BF8803"></div><div class="r" style="left:1916px;top:395px;width:4px;height:5.800000000000011px;background:#BF8803"></div><div class="r" style="left:1916px;top:408.8px;width:4px;height:6.0px;background:#BF8803"></div><div class="r" style="left:1916px;top:447px;width:4px;height:10px;background:#BF8803"></div><div class="r" style="left:1916px;top:468px;width:4px;height:11.800000000000011px;background:#BF8803"></div><div class="r" style="left:1916px;top:484px;width:4px;height:16.69999999999999px;background:#BF8803"></div><div class="r" style="left:1916px;top:516px;width:4px;height:12.799999999999955px;background:#BF8803"></div><div class="r" style="left:1916px;top:532px;width:4px;height:6px;background:#BF8803"></div><div class="r" style="left:1916px;top:575px;width:4px;height:13.799999999999955px;background:#BF8803"></div><div class="r" style="left:1916px;top:603px;width:4px;height:5.7999999999999545px;background:#BF8803"></div><div class="r" style="left:1916px;top:616.2px;width:4px;height:5.699999999999932px;background:#BF8803"></div><div class="r" style="left:1916px;top:641px;width:4px;height:31.799999999999955px;background:#BF8803"></div><div class="r" style="left:1916px;top:675.1px;width:4px;height:6.600000000000023px;background:#BF8803"></div><div class="r" style="left:1916px;top:688.1px;width:4px;height:5.600000000000023px;background:#BF8803"></div><div class="r" style="left:1916px;top:702px;width:4px;height:20.799999999999955px;background:#BF8803"></div><div class="r" style="left:1916px;top:726.2px;width:4px;height:10.5px;background:#BF8803"></div><div class="r" style="left:1916px;top:741px;width:4px;height:22.5px;background:#BF8803"></div><div class="r" style="left:1916px;top:767px;width:4px;height:9.5px;background:#BF8803"></div><div class="r" style="left:1916px;top:780px;width:4px;height:6.7000000000000455px;background:#BF8803"></div><div class="r" style="left:1916px;top:811px;width:4px;height:33.299999999999955px;background:#BF8803"></div><div class="r" style="left:1916px;top:849px;width:4px;height:15.5px;background:#BF8803"></div><div class="r" style="left:1916px;top:870.8px;width:4px;height:5.600000000000023px;background:#BF8803"></div><div class="r" style="left:1916px;top:879.3px;width:4px;height:5.7000000000000455px;background:#BF8803"></div><div class="r" style="left:1916px;top:246px;width:4px;height:4px;background:#1A85FF"></div><div class="r" style="left:1916px;top:797px;width:4px;height:5.7999999999999545px;background:#1A85FF"></div><div class="r" style="left:1911px;top:101px;width:5px;height:6px;background:#E9C38A"></div><div class="r" style="left:1911px;top:315px;width:5px;height:6px;background:#E9C38A"></div>
</body></html>
